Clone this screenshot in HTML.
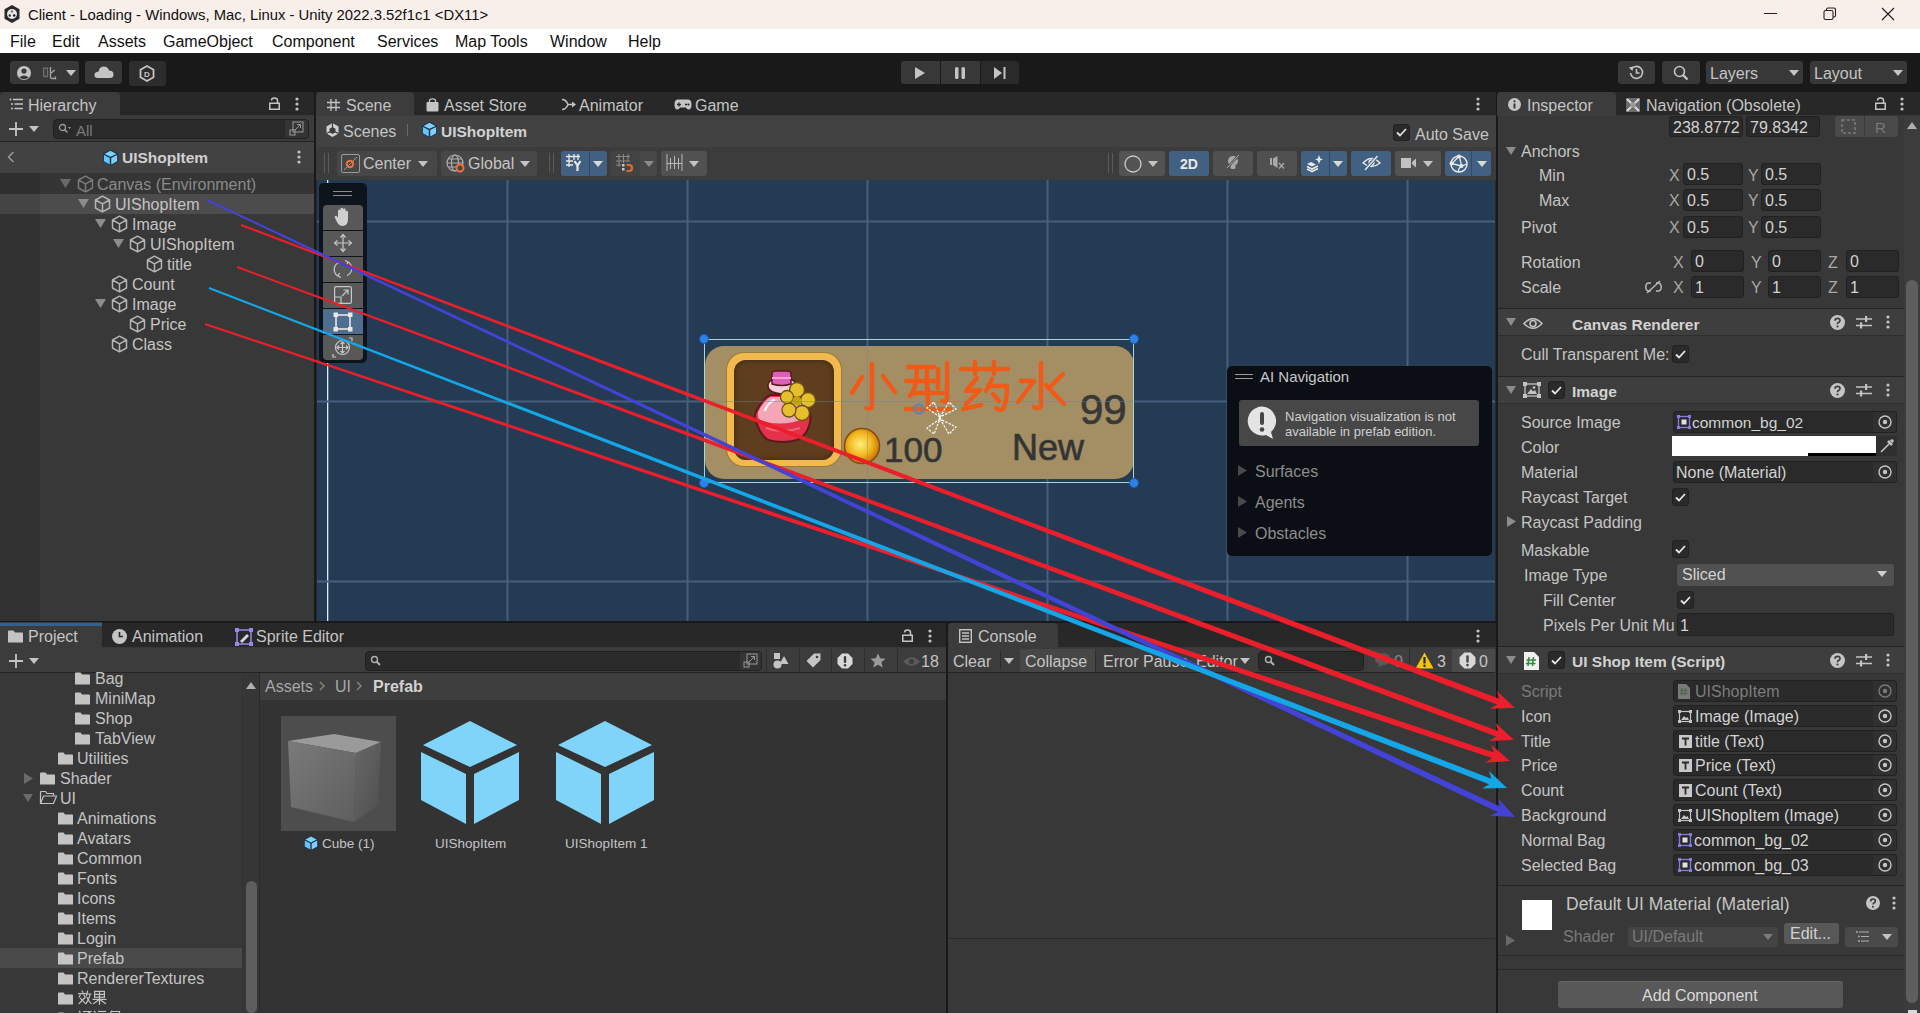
<!DOCTYPE html>
<html><head><meta charset="utf-8">
<style>
*{margin:0;padding:0;box-sizing:border-box}
html,body{width:1920px;height:1013px;overflow:hidden;background:#191919;font-family:"Liberation Sans",sans-serif}
.a{position:absolute}
.t{position:absolute;white-space:pre;line-height:1;font-size:16px;color:#c4c4c4;margin-top:1px}
.b{font-weight:bold}
svg{position:absolute;overflow:visible}
.fld{position:absolute;background:#2a2a2a;border-radius:3px;border:1px solid #212121}
.btn{position:absolute;background:#585858;border-radius:3px}
.tb{position:absolute;background:#383838;border-radius:3px}
.chk{position:absolute;width:17px;height:18px;background:#2a2a2a;border-radius:3px;border:1px solid #212121}
</style></head><body>
<!-- TITLE BAR -->
<div class="a" style="left:0;top:0;width:1920px;height:29px;background:#f8eeea"></div>
<!-- MENU -->
<div class="a" style="left:0;top:29px;width:1920px;height:24px;background:#ffffff"></div>
<!-- TOOLBAR -->
<div class="a" style="left:0;top:53px;width:1920px;height:39px;background:#191919"></div>

<!-- HIERARCHY PANEL -->
<div class="a" id="hier" style="left:0;top:92px;width:314px;height:529px;background:#282828"></div>
<div class="a" style="left:0;top:115px;width:314px;height:506px;background:#383838"></div>
<!-- SCENE PANEL -->
<div class="a" style="left:316px;top:92px;width:1180px;height:529px;background:#282828"></div>
<div class="a" style="left:316px;top:115px;width:1180px;height:65px;background:#3c3c3c"></div><div class="a" style="left:316px;top:116px;width:1180px;height:31px;background:#424242"></div>
<div class="a" style="left:317px;top:180px;width:1178px;height:441px;background:#253b54"></div>
<!-- INSPECTOR -->
<div class="a" style="left:1498px;top:92px;width:422px;height:921px;background:#282828"></div>
<div class="a" style="left:1498px;top:115px;width:422px;height:898px;background:#383838"></div>
<!-- PROJECT -->
<div class="a" style="left:0;top:623px;width:946px;height:390px;background:#282828"></div>
<div class="a" style="left:0;top:647px;width:946px;height:366px;background:#383838"></div>
<!-- CONSOLE -->
<div class="a" style="left:948px;top:623px;width:548px;height:390px;background:#282828"></div>
<div class="a" style="left:948px;top:647px;width:548px;height:366px;background:#383838"></div>


<!-- TITLE CONTENT -->
<svg style="left:3px;top:4px" width="18" height="20" viewBox="0 0 18 20"><path d="M9 1 L16.5 5.2 V14.8 L9 19 L1.5 14.8 V5.2Z" fill="#2a2a2a"/><circle cx="9" cy="10" r="5" fill="#e8e8e8"/><circle cx="9" cy="7.5" r="1.2" fill="#777"/><circle cx="6.8" cy="11.5" r="1.2" fill="#333"/><circle cx="11.2" cy="11.5" r="1.2" fill="#111"/></svg>
<div class="t" style="left:28px;top:7px;font-size:14.85px;color:#111">Client - Loading - Windows, Mac, Linux - Unity 2022.3.52f1c1 &lt;DX11&gt;</div>
<div class="a" style="left:1764px;top:13px;width:13px;height:1px;background:#222"></div>
<svg style="left:1823px;top:7px" width="14" height="14" viewBox="0 0 14 14"><rect x="1" y="3.5" width="9" height="9" rx="1.5" fill="none" stroke="#222" stroke-width="1.1"/><path d="M3.5 3.5 V2.5 Q3.5 1 5 1 H11 Q12.5 1 12.5 2.5 V8.5 Q12.5 10 11 10 H10" fill="none" stroke="#222" stroke-width="1.1"/></svg>
<svg style="left:1881px;top:7px" width="14" height="14" viewBox="0 0 14 14"><path d="M1 1 L13 13 M13 1 L1 13" stroke="#222" stroke-width="1.2"/></svg>
<!-- MENU CONTENT -->
<div class="t" style="left:10px;top:33px;font-size:16px;color:#111">File</div>
<div class="t" style="left:52px;top:33px;font-size:16px;color:#111">Edit</div>
<div class="t" style="left:98px;top:33px;font-size:16px;color:#111">Assets</div>
<div class="t" style="left:163px;top:33px;font-size:16px;color:#111">GameObject</div>
<div class="t" style="left:272px;top:33px;font-size:16px;color:#111">Component</div>
<div class="t" style="left:377px;top:33px;font-size:16px;color:#111">Services</div>
<div class="t" style="left:455px;top:33px;font-size:16px;color:#111">Map Tools</div>
<div class="t" style="left:550px;top:33px;font-size:16px;color:#111">Window</div>
<div class="t" style="left:628px;top:33px;font-size:16px;color:#111">Help</div>
<!-- TOOLBAR CONTENT -->
<div class="tb" style="left:10px;top:61px;width:69px;height:23px"></div>
<svg style="left:16px;top:65px" width="16" height="16" viewBox="0 0 16 16"><circle cx="8" cy="8" r="7" fill="#c4c4c4"/><circle cx="8" cy="6" r="2.6" fill="#383838"/><path d="M3.3 12.5 Q8 8.5 12.7 12.5 Q8 16 3.3 12.5Z" fill="#383838"/></svg>
<svg style="left:40px;top:64px" width="20" height="18" viewBox="40 64 20 18"><rect x="43.7" y="68.2" width="3.8" height="8.3" fill="none" stroke="#6e6e6e" stroke-width="1.4"/><path d="M50.5 67 V77.5 Q50.5 78.5 52 78.5 H55.5 V76.5 M50.5 73.5 L54.8 70" fill="none" stroke="#a8a8a8" stroke-width="1.3"/></svg>
<svg style="left:66px;top:70px" width="10" height="6" viewBox="0 0 10 6"><path d="M0 0H10L5 6Z" fill="#c4c4c4"/></svg>
<div class="tb" style="left:85px;top:61px;width:37px;height:23px"></div>
<svg style="left:94px;top:65px" width="20" height="14" viewBox="0 0 20 14"><path d="M4 13 Q0 13 0.5 9.5 Q1 6.5 4.5 6.8 Q5 2 9.5 1.5 Q14 1.5 15 5.5 Q19.5 5.5 19.5 9.5 Q19.5 13 16 13Z" fill="#c4c4c4"/></svg>
<div class="tb" style="left:129px;top:61px;width:37px;height:25px;background:#2d2d2d"></div>
<svg style="left:139px;top:65px" width="16" height="17" viewBox="0 0 16 17"><path d="M8 1 L14.5 4.7 V12.3 L8 16 L1.5 12.3 V4.7Z" fill="none" stroke="#c4c4c4" stroke-width="1.8"/><text x="8" y="12" font-size="8" font-weight="bold" text-anchor="middle" fill="#c4c4c4" font-family="Liberation Sans">D</text></svg>
<div class="tb" style="left:901px;top:61px;width:39px;height:23px;border-radius:3px 0 0 3px"></div>
<div class="tb" style="left:941px;top:61px;width:39px;height:23px;border-radius:0"></div>
<div class="tb" style="left:981px;top:61px;width:38px;height:23px;background:#2a2a2a;border-radius:0 3px 3px 0"></div>
<svg style="left:914px;top:67px" width="12" height="12" viewBox="0 0 12 12"><path d="M1 0 L11 6 L1 12Z" fill="#c4c4c4"/></svg>
<svg style="left:955px;top:67px" width="11" height="12" viewBox="0 0 11 12"><rect x="0" y="0" width="3.5" height="12" rx="1.5" fill="#c4c4c4"/><rect x="6.5" y="0" width="3.5" height="12" rx="1.5" fill="#c4c4c4"/></svg>
<svg style="left:994px;top:67px" width="12" height="12" viewBox="0 0 12 12"><path d="M0 0 L8 6 L0 12Z" fill="#c4c4c4"/><rect x="9.5" y="0" width="2" height="12" fill="#c4c4c4"/></svg>
<div class="tb" style="left:1618px;top:61px;width:37px;height:23px"></div>
<svg style="left:1628px;top:64px" width="17" height="17" viewBox="0 0 17 17"><path d="M3.2 5.5 A6 6 0 1 1 2.5 9" fill="none" stroke="#c4c4c4" stroke-width="1.6"/><path d="M0.8 3.5 L4.5 7 L5.2 2.5Z" fill="#c4c4c4"/><path d="M8.5 5 V9 H11.5" fill="none" stroke="#c4c4c4" stroke-width="1.6"/></svg>
<div class="tb" style="left:1662px;top:61px;width:38px;height:23px"></div>
<svg style="left:1673px;top:65px" width="16" height="16" viewBox="0 0 16 16"><circle cx="6.5" cy="6.5" r="5" fill="none" stroke="#c4c4c4" stroke-width="1.6"/><path d="M10 10 L14.5 14.5" stroke="#c4c4c4" stroke-width="2.4"/></svg>
<div class="tb" style="left:1706px;top:61px;width:97px;height:23px"></div>
<div class="t" style="left:1710px;top:65px;font-size:16px">Layers</div>
<svg style="left:1789px;top:70px" width="10" height="6" viewBox="0 0 10 6"><path d="M0 0H10L5 6Z" fill="#c4c4c4"/></svg>
<div class="tb" style="left:1810px;top:61px;width:97px;height:23px"></div>
<div class="t" style="left:1814px;top:65px;font-size:16px">Layout</div>
<svg style="left:1893px;top:70px" width="10" height="6" viewBox="0 0 10 6"><path d="M0 0H10L5 6Z" fill="#c4c4c4"/></svg>

<div class="a" style="left:0;top:92px;width:120px;height:24px;background:#3c3c3c;border-radius:4px 4px 0 0"></div>
<svg style="left:9px;top:98px" width="14" height="12" viewBox="0 0 14 12"><path d="M4 1.5H14M5.5 6H14M5.5 10.5H14" stroke="#c4c4c4" stroke-width="1.4"/><circle cx="1.5" cy="1.5" r="1" fill="#c4c4c4"/><circle cx="3" cy="6" r="1" fill="#c4c4c4"/><circle cx="3" cy="10.5" r="1" fill="#c4c4c4"/></svg>
<div class="t" style="left:28px;top:97px">Hierarchy</div>
<svg style="left:269px;top:97px" width="11" height="13" viewBox="0 0 11 13"><rect x="0.75" y="6.25" width="9.5" height="6" fill="none" stroke="#c4c4c4" stroke-width="1.5"/><path d="M8.5 6 V3.5 Q8.5 1 5.5 1 Q2.5 1 2.5 3.5" fill="none" stroke="#c4c4c4" stroke-width="1.5"/></svg>
<svg style="left:295px;top:97px" width="4" height="14" viewBox="0 0 4 14"><circle cx="2" cy="2" r="1.6" fill="#c4c4c4"/><circle cx="2" cy="7" r="1.6" fill="#c4c4c4"/><circle cx="2" cy="12" r="1.6" fill="#c4c4c4"/></svg>
<div class="a" style="left:0;top:116px;width:314px;height:25px;background:#3c3c3c"></div>
<div class="a" style="left:0;top:141px;width:314px;height:1px;background:#232323"></div>
<svg style="left:8px;top:121px" width="16" height="16" viewBox="0 0 16 16"><path d="M8 1V15M1 8H15" stroke="#c4c4c4" stroke-width="1.8"/></svg>
<svg style="left:29px;top:126px" width="10" height="6" viewBox="0 0 10 6"><path d="M0 0H10L5 6Z" fill="#c4c4c4"/></svg>
<div class="fld" style="left:53px;top:119px;width:256px;height:20px;border-radius:4px"></div>
<div class="a" style="left:285px;top:120px;width:23px;height:18px;background:#343434;border-radius:0 3px 3px 0"></div>
<svg style="left:289px;top:121px" width="15" height="15" viewBox="0 0 15 15"><rect x="4" y="1" width="10" height="10" fill="none" stroke="#9a9a9a" stroke-width="1"/><rect x="1" y="9" width="5" height="5" fill="none" stroke="#9a9a9a" stroke-width="1"/><path d="M6 9 L11.5 3.5 M8 3.5H11.5V7" fill="none" stroke="#9a9a9a" stroke-width="1"/></svg>
<svg style="left:58px;top:123px" width="14" height="12" viewBox="0 0 14 12"><circle cx="4.5" cy="4.5" r="3" fill="none" stroke="#9a9a9a" stroke-width="1.3"/><path d="M6.5 6.5 L9.5 9.5" stroke="#9a9a9a" stroke-width="1.5"/><path d="M10 4H13L11.5 6Z" fill="#9a9a9a"/></svg>
<div class="t" style="left:76px;top:122px;font-size:15px;color:#7a7a7a">All</div>
<div class="a" style="left:0;top:142px;width:314px;height:31px;background:#424242"></div>
<svg style="left:7px;top:151px" width="8" height="12" viewBox="0 0 8 12"><path d="M6.5 1 L1.5 6 L6.5 11" fill="none" stroke="#9a9a9a" stroke-width="1.5"/></svg>
<svg style="left:102px;top:149px" width="17" height="17" viewBox="0 0 16 16"><path d="M8 0.5 L15 4.3 V12 L8 15.8 L1 12 V4.3Z" fill="#1e3450"/><path d="M8 1.6 L13.6 4.6 L8 7.4 L2.4 4.6Z" fill="#7fd0fa"/><path d="M1.8 5.6 L7.3 8.4 V14.6 L1.8 11.6Z" fill="#6ac4f4"/><path d="M14.2 5.6 L8.7 8.4 V14.6 L14.2 11.6Z" fill="#7fd0fa"/></svg>
<div class="t b" style="left:122px;top:149px;font-size:15.5px;color:#d0d0d0">UIShopItem</div>
<svg style="left:297px;top:150px" width="4" height="14" viewBox="0 0 4 14"><circle cx="2" cy="2" r="1.6" fill="#c4c4c4"/><circle cx="2" cy="7" r="1.6" fill="#c4c4c4"/><circle cx="2" cy="12" r="1.6" fill="#c4c4c4"/></svg>
<div class="a" style="left:0;top:173px;width:314px;height:448px;background:#383838"></div>

<div class="a" style="left:0;top:173px;width:314px;height:21px;background:#353535"></div>
<div class="a" style="left:0;top:194px;width:314px;height:20px;background:#4c4c4c"></div><div class="a" style="left:0;top:173px;width:40px;height:448px;background:rgba(0,0,0,0.1)"></div>
<svg style="left:60px;top:179px" width="11" height="9" viewBox="0 0 11 9"><path d="M0 0H11L5.5 9Z" fill="#6a6a6a"/></svg>
<svg style="left:77px;top:175px" width="17" height="18" viewBox="0 0 17 18"><path d="M8.5 1.2 L15.5 5 V13 L8.5 16.8 L1.5 13 V5Z M1.5 5 L8.5 8.8 L15.5 5 M8.5 8.8 V16.8" fill="none" stroke="#7a7a7a" stroke-width="1.5" stroke-linejoin="round"/></svg>
<div class="t" style="left:97px;top:176px;color:#8a8a8a">Canvas (Environment)</div>
<svg style="left:78px;top:199px" width="11" height="9" viewBox="0 0 11 9"><path d="M0 0H11L5.5 9Z" fill="#8c8c8c"/></svg>
<svg style="left:94px;top:195px" width="17" height="18" viewBox="0 0 17 18"><path d="M8.5 1.2 L15.5 5 V13 L8.5 16.8 L1.5 13 V5Z M1.5 5 L8.5 8.8 L15.5 5 M8.5 8.8 V16.8" fill="none" stroke="#b4b4b4" stroke-width="1.5" stroke-linejoin="round"/></svg>
<div class="t" style="left:115px;top:196px;color:#c4c4c4">UIShopItem</div>
<svg style="left:95px;top:219px" width="11" height="9" viewBox="0 0 11 9"><path d="M0 0H11L5.5 9Z" fill="#8c8c8c"/></svg>
<svg style="left:111px;top:215px" width="17" height="18" viewBox="0 0 17 18"><path d="M8.5 1.2 L15.5 5 V13 L8.5 16.8 L1.5 13 V5Z M1.5 5 L8.5 8.8 L15.5 5 M8.5 8.8 V16.8" fill="none" stroke="#b4b4b4" stroke-width="1.5" stroke-linejoin="round"/></svg>
<div class="t" style="left:132px;top:216px;color:#c4c4c4">Image</div>
<svg style="left:113px;top:239px" width="11" height="9" viewBox="0 0 11 9"><path d="M0 0H11L5.5 9Z" fill="#8c8c8c"/></svg>
<svg style="left:129px;top:235px" width="17" height="18" viewBox="0 0 17 18"><path d="M8.5 1.2 L15.5 5 V13 L8.5 16.8 L1.5 13 V5Z M1.5 5 L8.5 8.8 L15.5 5 M8.5 8.8 V16.8" fill="none" stroke="#b4b4b4" stroke-width="1.5" stroke-linejoin="round"/></svg>
<div class="t" style="left:150px;top:236px;color:#c4c4c4">UIShopItem</div>
<svg style="left:146px;top:255px" width="17" height="18" viewBox="0 0 17 18"><path d="M8.5 1.2 L15.5 5 V13 L8.5 16.8 L1.5 13 V5Z M1.5 5 L8.5 8.8 L15.5 5 M8.5 8.8 V16.8" fill="none" stroke="#b4b4b4" stroke-width="1.5" stroke-linejoin="round"/></svg>
<div class="t" style="left:167px;top:256px;color:#c4c4c4">title</div>
<svg style="left:111px;top:275px" width="17" height="18" viewBox="0 0 17 18"><path d="M8.5 1.2 L15.5 5 V13 L8.5 16.8 L1.5 13 V5Z M1.5 5 L8.5 8.8 L15.5 5 M8.5 8.8 V16.8" fill="none" stroke="#b4b4b4" stroke-width="1.5" stroke-linejoin="round"/></svg>
<div class="t" style="left:132px;top:276px;color:#c4c4c4">Count</div>
<svg style="left:95px;top:299px" width="11" height="9" viewBox="0 0 11 9"><path d="M0 0H11L5.5 9Z" fill="#8c8c8c"/></svg>
<svg style="left:111px;top:295px" width="17" height="18" viewBox="0 0 17 18"><path d="M8.5 1.2 L15.5 5 V13 L8.5 16.8 L1.5 13 V5Z M1.5 5 L8.5 8.8 L15.5 5 M8.5 8.8 V16.8" fill="none" stroke="#b4b4b4" stroke-width="1.5" stroke-linejoin="round"/></svg>
<div class="t" style="left:132px;top:296px;color:#c4c4c4">Image</div>
<svg style="left:129px;top:315px" width="17" height="18" viewBox="0 0 17 18"><path d="M8.5 1.2 L15.5 5 V13 L8.5 16.8 L1.5 13 V5Z M1.5 5 L8.5 8.8 L15.5 5 M8.5 8.8 V16.8" fill="none" stroke="#b4b4b4" stroke-width="1.5" stroke-linejoin="round"/></svg>
<div class="t" style="left:150px;top:316px;color:#c4c4c4">Price</div>
<svg style="left:111px;top:335px" width="17" height="18" viewBox="0 0 17 18"><path d="M8.5 1.2 L15.5 5 V13 L8.5 16.8 L1.5 13 V5Z M1.5 5 L8.5 8.8 L15.5 5 M8.5 8.8 V16.8" fill="none" stroke="#b4b4b4" stroke-width="1.5" stroke-linejoin="round"/></svg>
<div class="t" style="left:132px;top:336px;color:#c4c4c4">Class</div>
<div class="a" style="left:316px;top:92px;width:98px;height:24px;background:#3c3c3c;border-radius:4px 4px 0 0"></div>
<svg style="left:327px;top:99px" width="13" height="12" viewBox="0 0 13 12"><path d="M4 0V12M9 0V12M0 3.5H13M0 8.5H13" stroke="#c4c4c4" stroke-width="1.3"/></svg>
<div class="t" style="left:346px;top:97px;font-size:16px">Scene</div>
<svg style="left:426px;top:98px" width="13" height="14" viewBox="0 0 13 14"><path d="M3.5 4V2.5Q3.5 0.8 6.5 0.8Q9.5 0.8 9.5 2.5V4" fill="none" stroke="#c4c4c4" stroke-width="1.3"/><rect x="0.5" y="4" width="12" height="9.5" rx="1" fill="#c4c4c4"/></svg>
<div class="t" style="left:444px;top:97px;font-size:16px">Asset Store</div>
<svg style="left:561px;top:98px" width="16" height="13" viewBox="0 0 16 13"><path d="M1 1.5 Q5 1.5 7 6.5 Q5 11.5 1 11.5 M7 6.5 H13" fill="none" stroke="#c4c4c4" stroke-width="1.5"/><path d="M11 3.5 L15 6.5 L11 9.5Z" fill="#c4c4c4"/></svg>
<div class="t" style="left:579px;top:97px;font-size:16px">Animator</div>
<svg style="left:674px;top:99px" width="18" height="11" viewBox="0 0 18 11"><path d="M4 0.5H14Q17.5 0.5 17.5 5.5Q17.5 10.5 14.5 10.5Q13 10.5 12 8.5H6Q5 10.5 3.5 10.5Q0.5 10.5 0.5 5.5Q0.5 0.5 4 0.5Z" fill="#c4c4c4"/><path d="M3 5.5H7M5 3.5V7.5" stroke="#282828" stroke-width="1.3"/><circle cx="12" cy="5.5" r="1.1" fill="#282828"/><circle cx="14.5" cy="5.5" r="1.1" fill="#282828"/></svg>
<div class="t" style="left:695px;top:97px;font-size:16px">Game</div>
<svg style="left:1476px;top:97px" width="4" height="14" viewBox="0 0 4 14"><circle cx="2" cy="2" r="1.6" fill="#c4c4c4"/><circle cx="2" cy="7" r="1.6" fill="#c4c4c4"/><circle cx="2" cy="12" r="1.6" fill="#c4c4c4"/></svg>
<svg style="left:325px;top:122px" width="15" height="16" viewBox="0 0 15 16"><path d="M7.5 1 L13.5 4.5 V11.5 L7.5 15 L1.5 11.5 V4.5Z" fill="#d0d0d0"/><path d="M7.5 5 L10.5 6.8 V10.2 L7.5 12 L4.5 10.2 V6.8Z" fill="#3c3c3c"/><path d="M7.5 8.5V1M7.5 8.5L1.5 11.5M7.5 8.5L13.5 11.5" stroke="#3c3c3c" stroke-width="1.2"/></svg>
<div class="t" style="left:343px;top:123px;font-size:16px">Scenes</div>
<div class="a" style="left:407px;top:124px;width:1px;height:12px;background:#6a6a6a;"></div>
<svg style="left:421px;top:121px" width="17" height="17" viewBox="0 0 16 16"><path d="M8 0.5 L15 4.3 V12 L8 15.8 L1 12 V4.3Z" fill="#1e3450"/><path d="M8 1.6 L13.6 4.6 L8 7.4 L2.4 4.6Z" fill="#7fd0fa"/><path d="M1.8 5.6 L7.3 8.4 V14.6 L1.8 11.6Z" fill="#6ac4f4"/><path d="M14.2 5.6 L8.7 8.4 V14.6 L14.2 11.6Z" fill="#7fd0fa"/></svg>
<div class="t b" style="left:441px;top:123px;font-size:15.5px;color:#d2d2d2">UIShopItem</div>
<div class="chk" style="left:1393px;top:124px;width:17px;height:17px"></div>
<svg style="left:1396px;top:128px" width="11" height="9" viewBox="0 0 11 9"><path d="M1 4.5 L4 7.5 L10 1" fill="none" stroke="#e0e0e0" stroke-width="1.8"/></svg>
<div class="t" style="left:1415px;top:126px;font-size:16px">Auto Save</div>
<div class="a" style="left:324px;top:153px;width:1px;height:20px;background:#5a5a5a;"></div>
<div class="a" style="left:328px;top:153px;width:1px;height:20px;background:#5a5a5a;"></div>
<div class="a" style="left:337px;top:151px;width:100px;height:25px;background:#474747;border-radius:3px"></div>
<svg style="left:341px;top:154px" width="19" height="19" viewBox="0 0 19 19"><rect x="0.5" y="0.5" width="18" height="18" rx="1.5" fill="none" stroke="#9a9a9a" stroke-width="1"/><path d="M3 16 L16 3" stroke="#9a9a9a" stroke-width="1"/><circle cx="9" cy="10" r="3.2" fill="none" stroke="#f0703a" stroke-width="2"/></svg>
<div class="t" style="left:363px;top:155px;font-size:16px">Center</div>
<svg style="left:418px;top:161px" width="10" height="6" viewBox="0 0 10 6"><path d="M0 0H10L5 6Z" fill="#c4c4c4"/></svg>
<div class="a" style="left:441px;top:151px;width:96px;height:25px;background:#474747;border-radius:3px"></div>
<svg style="left:446px;top:154px" width="19" height="19" viewBox="0 0 19 19"><circle cx="9" cy="9" r="8" fill="none" stroke="#b0b0b0" stroke-width="1.2"/><ellipse cx="9" cy="9" rx="3.5" ry="8" fill="none" stroke="#b0b0b0" stroke-width="1.2"/><path d="M1 9H17M2.5 5H15.5M2.5 13H15.5" stroke="#b0b0b0" stroke-width="1.2"/><circle cx="14" cy="14" r="3.5" fill="#474747" stroke="#f0703a" stroke-width="2"/></svg>
<div class="t" style="left:468px;top:155px;font-size:16px">Global</div>
<svg style="left:520px;top:161px" width="10" height="6" viewBox="0 0 10 6"><path d="M0 0H10L5 6Z" fill="#c4c4c4"/></svg>
<div class="a" style="left:549px;top:153px;width:1px;height:20px;background:#5a5a5a;"></div>
<div class="a" style="left:553px;top:153px;width:1px;height:20px;background:#5a5a5a;"></div>
<div class="a" style="left:561px;top:151px;width:46px;height:25px;background:#426082;border-radius:3px"></div>
<div class="a" style="left:589px;top:151px;width:1px;height:25px;background:#314a66;"></div>
<svg style="left:566px;top:154px" width="19" height="19" viewBox="0 0 19 19"><path d="M3 0V13M8 0V6M12 0V6M0 2.5H14M0 7H7M0 11H7" stroke="#e8e8e8" stroke-width="1.3"/><path d="M8.5 7 L11.5 11.5 L14.5 7 M11.5 11.5V17" fill="none" stroke="#e8e8e8" stroke-width="2.2"/></svg>
<svg style="left:593px;top:161px" width="10" height="6" viewBox="0 0 10 6"><path d="M0 0H10L5 6Z" fill="#d8d8d8"/></svg>
<div class="a" style="left:611px;top:151px;width:46px;height:25px;background:#434343;border-radius:3px"></div>
<div class="a" style="left:640px;top:151px;width:17px;height:25px;background:#474747;border-radius:0 3px 3px 0"></div>
<svg style="left:616px;top:154px" width="19" height="19" viewBox="0 0 19 19"><path d="M3 0V13M7.5 0V9M12 0V7M0 2.5H14M0 7H14M0 11H5" stroke="#8a8a8a" stroke-width="1"/><rect x="6" y="10" width="2.5" height="2.5" fill="#c8c8c8"/><rect x="6" y="14" width="2.5" height="2.5" fill="#c8c8c8"/><path d="M10.5 11 H13 A3 3 0 0 1 13 17 H10.5" fill="none" stroke="#e06a30" stroke-width="2.2"/></svg>
<svg style="left:644px;top:161px" width="10" height="6" viewBox="0 0 10 6"><path d="M0 0H10L5 6Z" fill="#8a8a8a"/></svg>
<div class="a" style="left:661px;top:151px;width:46px;height:25px;background:#515151;border-radius:3px"></div>
<svg style="left:666px;top:154px" width="17" height="18" viewBox="0 0 17 18"><path d="M1 0V17M16 0V17M4.5 4V15M8.5 2V15M12.5 4V15M1 9.5H16" stroke="#b8b8b8" stroke-width="1"/></svg>
<svg style="left:689px;top:161px" width="10" height="6" viewBox="0 0 10 6"><path d="M0 0H10L5 6Z" fill="#c4c4c4"/></svg>
<div class="a" style="left:1108px;top:153px;width:1px;height:20px;background:#5a5a5a;"></div>
<div class="a" style="left:1112px;top:153px;width:1px;height:20px;background:#5a5a5a;"></div>
<div class="a" style="left:1119px;top:151px;width:46px;height:25px;background:#535353;border-radius:3px"></div>
<svg style="left:1124px;top:155px" width="18" height="18" viewBox="0 0 18 18"><circle cx="9" cy="9" r="8" fill="none" stroke="#c8c8c8" stroke-width="1.3"/><path d="M13 2.5 A8 8 0 0 1 4 16 A7 7 0 0 0 13 2.5Z" fill="#c8c8c8"/></svg>
<svg style="left:1148px;top:161px" width="10" height="6" viewBox="0 0 10 6"><path d="M0 0H10L5 6Z" fill="#c4c4c4"/></svg>
<div class="a" style="left:1169px;top:151px;width:40px;height:25px;background:#426082;border-radius:3px"></div>
<div class="t b" style="left:1180px;top:156px;font-size:14px;color:#e8e8e8">2D</div>
<div class="a" style="left:1213px;top:151px;width:40px;height:25px;background:#505050;border-radius:3px"></div>
<svg style="left:1225px;top:154px" width="16" height="18" viewBox="0 0 16 18"><circle cx="8" cy="7" r="5" fill="#a8a8a8"/><rect x="5.5" y="11" width="5" height="4" rx="1.5" fill="#a8a8a8"/><path d="M2 14 L14 1" stroke="#505050" stroke-width="2.5"/><path d="M2 14 L14 1" stroke="#a8a8a8" stroke-width="1"/></svg>
<div class="a" style="left:1257px;top:151px;width:40px;height:25px;background:#505050;border-radius:3px"></div>
<svg style="left:1270px;top:156px" width="16" height="14" viewBox="0 0 16 14"><rect x="0" y="2" width="2" height="7" fill="#a8a8a8"/><path d="M3 2.5 L7.5 0 V12 L3 9Z" fill="#a8a8a8"/><path d="M9 7 L14 12.5 M14 7 L9 12.5" stroke="#a8a8a8" stroke-width="1.3"/></svg>
<div class="a" style="left:1301px;top:151px;width:46px;height:25px;background:#426082;border-radius:3px"></div>
<div class="a" style="left:1329px;top:151px;width:1px;height:25px;background:#314a66;"></div>
<svg style="left:1306px;top:155px" width="17" height="17" viewBox="0 0 17 17"><path d="M13 0 L14.3 3.5 L17 4.5 L14.3 5.5 L13 9 L11.7 5.5 L9 4.5 L11.7 3.5Z" fill="#e8e8e8"/><path d="M1 9 L5 7 L10 9.5 L6 11.5Z" fill="#e8e8e8"/><path d="M1 11.5 L6 14 L12 11" fill="none" stroke="#e8e8e8" stroke-width="1.6"/><path d="M1 14 L6 16.5 L12 13.5" fill="none" stroke="#e8e8e8" stroke-width="1.6"/></svg>
<svg style="left:1333px;top:161px" width="10" height="6" viewBox="0 0 10 6"><path d="M0 0H10L5 6Z" fill="#d8d8d8"/></svg>
<div class="a" style="left:1351px;top:151px;width:40px;height:25px;background:#426082;border-radius:3px"></div>
<svg style="left:1362px;top:155px" width="19" height="16" viewBox="0 0 19 16"><path d="M1 8 Q9.5 -1 18 8 Q9.5 15 1 8Z" fill="none" stroke="#e8e8e8" stroke-width="1.4"/><circle cx="9.5" cy="7.5" r="2.5" fill="none" stroke="#e8e8e8" stroke-width="1.3"/><path d="M3 15 L15.5 1" stroke="#426082" stroke-width="3"/><path d="M3 15 L15.5 1" stroke="#e8e8e8" stroke-width="1.4"/></svg>
<div class="a" style="left:1395px;top:151px;width:46px;height:25px;background:#535353;border-radius:3px"></div>
<svg style="left:1401px;top:157px" width="16" height="12" viewBox="0 0 16 12"><rect x="0" y="1" width="10" height="10" fill="#c0c0c0"/><path d="M11 5 L15 1.5 V10.5 L11 7Z" fill="#c0c0c0"/></svg>
<svg style="left:1423px;top:161px" width="10" height="6" viewBox="0 0 10 6"><path d="M0 0H10L5 6Z" fill="#c4c4c4"/></svg>
<div class="a" style="left:1445px;top:151px;width:46px;height:25px;background:#426082;border-radius:3px"></div>
<div class="a" style="left:1471px;top:151px;width:1px;height:25px;background:#314a66;"></div>
<svg style="left:1449px;top:154px" width="20" height="20" viewBox="0 0 20 20"><circle cx="10" cy="10" r="8" fill="none" stroke="#e8e8e8" stroke-width="1.5"/><path d="M10 2 Q4 9 2.5 9.5 M10 2 Q12 8 12.5 12 Q8 16 10 18 M2.5 9.5 L12.5 12 L18 10" fill="none" stroke="#e8e8e8" stroke-width="1.3"/><circle cx="10" cy="2.5" r="2" fill="#e8e8e8"/><circle cx="2.5" cy="9.5" r="2" fill="#e8e8e8"/><circle cx="12.5" cy="12" r="2" fill="#e8e8e8"/></svg>
<svg style="left:1477px;top:161px" width="10" height="6" viewBox="0 0 10 6"><path d="M0 0H10L5 6Z" fill="#d8d8d8"/></svg>
<svg style="left:317px;top:180px" width="1178" height="441" viewBox="0 0 1178 441">
<rect x="10" y="0" width="1.3" height="441" fill="#dcecfa"/>
<rect x="189.5" y="0" width="2" height="441" fill="#46607c"/>
<rect x="369.5" y="0" width="2" height="441" fill="#46607c"/>
<rect x="549.5" y="0" width="2" height="441" fill="#46607c"/>
<rect x="729.5" y="0" width="2" height="441" fill="#46607c"/>
<rect x="909.5" y="0" width="2" height="441" fill="#46607c"/>
<rect x="1089.5" y="0" width="2" height="441" fill="#46607c"/>
<rect x="0" y="40.5" width="1178" height="2" fill="#46607c"/>
<rect x="0" y="220.5" width="1178" height="2" fill="#46607c"/>
<rect x="0" y="400.5" width="1178" height="2" fill="#46607c"/>
</svg>
<div class="a" style="left:319px;top:183px;width:48px;height:180px;background:#0e141b;border-radius:5px"></div>
<div class="a" style="left:333px;top:191px;width:19px;height:1px;background:#8a8a8a;"></div>
<div class="a" style="left:333px;top:195px;width:19px;height:1px;background:#8a8a8a;"></div>
<div class="a" style="left:323px;top:205px;width:40px;height:25px;background:#585858;border-radius:4px 4px 0 0"></div>
<div class="a" style="left:323px;top:231px;width:40px;height:25px;background:#585858;"></div>
<div class="a" style="left:323px;top:257px;width:40px;height:25px;background:#585858;"></div>
<div class="a" style="left:323px;top:283px;width:40px;height:25px;background:#585858;"></div>
<div class="a" style="left:323px;top:309px;width:40px;height:25px;background:#4f6d8e;"></div>
<div class="a" style="left:323px;top:335px;width:40px;height:25px;background:#585858;border-radius:0 0 4px 4px"></div>
<svg style="left:334px;top:207px" width="18" height="20" viewBox="0 0 18 20"><path d="M4 11 V4 Q4 2.5 5.2 2.5 Q6.4 2.5 6.4 4 V9 V2.2 Q6.4 0.8 7.7 0.8 Q9 0.8 9 2.2 V9 V2.8 Q9 1.4 10.3 1.4 Q11.6 1.4 11.6 2.8 V9.5 V5 Q11.6 3.8 12.8 3.8 Q14 3.8 14 5 V12 Q14 19 8.5 19 Q5 19 3 15 L0.8 10.5 Q0.3 9.2 1.5 8.8 Q2.5 8.5 3.2 9.6Z" fill="#d0d0d0"/></svg>
<svg style="left:333px;top:233px" width="20" height="20" viewBox="0 0 20 20"><path d="M10 2V18M2 10H18" stroke="#c8c8c8" stroke-width="1.2"/><path d="M7.5 4.5L10 1.5L12.5 4.5M7.5 15.5L10 18.5L12.5 15.5M4.5 7.5L1.5 10L4.5 12.5M15.5 7.5L18.5 10L15.5 12.5" fill="none" stroke="#c8c8c8" stroke-width="1.2"/></svg>
<svg style="left:333px;top:259px" width="20" height="20" viewBox="0 0 20 20"><path d="M6 3.5 A7.5 7.5 0 0 0 5 17 M14 16.5 A7.5 7.5 0 0 0 15 3" fill="none" stroke="#c8c8c8" stroke-width="1.2"/><path d="M12 1.5 L15 3 L13.5 6 M8 18.5 L5 17 L6.5 14" fill="none" stroke="#c8c8c8" stroke-width="1.2"/></svg>
<svg style="left:334px;top:286px" width="18" height="18" viewBox="0 0 18 18"><rect x="0.6" y="0.6" width="16.8" height="16.8" rx="1.5" fill="none" stroke="#c8c8c8" stroke-width="1.2"/><path d="M0.6 11 H7 V17.4" fill="none" stroke="#c8c8c8" stroke-width="1.2"/><path d="M8 10 L14 4 M9.5 4 H14 V8.5" fill="none" stroke="#c8c8c8" stroke-width="1.2"/></svg>
<svg style="left:333px;top:312px" width="20" height="20" viewBox="0 0 20 20"><rect x="3" y="3" width="14" height="14" fill="none" stroke="#e8e8e8" stroke-width="1.6"/><rect x="0.5" y="0.5" width="4.5" height="4.5" fill="#e8e8e8"/><rect x="15" y="0.5" width="4.5" height="4.5" fill="#e8e8e8"/><rect x="0.5" y="15" width="4.5" height="4.5" fill="#e8e8e8"/><rect x="15" y="15" width="4.5" height="4.5" fill="#e8e8e8"/></svg>
<svg style="left:332px;top:337px" width="21" height="21" viewBox="0 0 21 21"><circle cx="10.5" cy="10.5" r="7" fill="none" stroke="#c8c8c8" stroke-width="1.2"/><path d="M10.5 5V16M5 10.5H16" stroke="#c8c8c8" stroke-width="1.2"/><path d="M8.5 7L10.5 5L12.5 7M8.5 14L10.5 16L12.5 14M7 8.5L5 10.5L7 12.5M14 8.5L16 10.5L14 12.5" fill="none" stroke="#c8c8c8" stroke-width="1.1"/><path d="M1 17V20H4M17 1H20V4" fill="none" stroke="#c8c8c8" stroke-width="1.2"/></svg>
<div class="a" style="left:705px;top:346px;width:429px;height:133px;background:#a38f63;border-radius:19px"></div>
<div class="a" style="left:704px;top:339px;width:430px;height:144px;border:1.5px solid #a8d8d0"></div>
<div class="a" style="left:699px;top:334px;width:10px;height:10px;border-radius:50%;background:#2f7fe8;border:1px solid #1b5db8"></div>
<div class="a" style="left:1129px;top:334px;width:10px;height:10px;border-radius:50%;background:#2f7fe8;border:1px solid #1b5db8"></div>
<div class="a" style="left:699px;top:478px;width:10px;height:10px;border-radius:50%;background:#2f7fe8;border:1px solid #1b5db8"></div>
<div class="a" style="left:1129px;top:478px;width:10px;height:10px;border-radius:50%;background:#2f7fe8;border:1px solid #1b5db8"></div>
<div class="a" style="left:727px;top:353px;width:114px;height:113px;background:#f2b94e;border-radius:17px;box-shadow:0 0 0 1px #9a7a3e"></div>
<div class="a" style="left:734px;top:360px;width:100px;height:100px;background:#5f3e1f;border-radius:12px;box-shadow:inset 0 0 6px #3d250f"></div>
<svg style="left:745px;top:365px" width="80" height="85" viewBox="745 365 80 85">
<path d="M770 395 Q763 398 756 412 Q753 418 757 424 Q761 436 768 440 Q782 444 797 440 Q806 436 809 426 Q812 418 809 411 Q803 398 797 395Z" fill="#e5324a" stroke="#5a1a20" stroke-width="2"/>
<path d="M771 397 Q764 400 758 412 Q757 418 760 420 Q782 428 806 418 Q808 414 806 410 Q801 400 796 397Z" fill="#f2a6b6"/>
<path d="M765 410 Q768 403 774 400" fill="none" stroke="#fff" stroke-width="2.5" stroke-linecap="round" opacity="0.85"/>
<path d="M766 428 Q782 434 800 428" fill="none" stroke="#f77a8a" stroke-width="2" opacity="0.7"/>
<path d="M768 387 Q767 380 776 379 H788 Q797 380 796 387 Q795 393 782 394 Q769 393 768 387Z" fill="#f5d0dc" stroke="#5a1a20" stroke-width="1.6"/>
<path d="M772 374 Q772 371 776 371 H787 Q791 371 791 374 V384 Q782 387 772 384Z" fill="#de5fb8" stroke="#5a1a20" stroke-width="1.5"/>
<path d="M772 378 H791" stroke="#f5a0d8" stroke-width="2"/>
<g fill="#e6c02c" stroke="#6e5212" stroke-width="1.3">
<circle cx="797" cy="390" r="7.5"/><circle cx="808" cy="400" r="7.5"/><circle cx="802" cy="413" r="7.5"/><circle cx="789" cy="410" r="7"/><circle cx="787" cy="397" r="6.5"/>
</g>
<circle cx="797" cy="401" r="4.5" fill="#caa01a"/>
</svg>
<svg style="left:843px;top:427px" width="38" height="38" viewBox="0 0 38 38"><defs><radialGradient id="cg" cx="0.45" cy="0.45" r="0.6"><stop offset="0" stop-color="#fff07a"/><stop offset="0.55" stop-color="#f2b61c"/><stop offset="1" stop-color="#c06a08"/></radialGradient></defs><circle cx="19" cy="19" r="17.5" fill="url(#cg)" stroke="#8a4a10" stroke-width="1.5"/></svg>
<svg style="left:845px;top:358px" width="225" height="58" viewBox="845 358 225 58" fill="none" stroke="#f05a16" stroke-width="4.4" stroke-linecap="round" stroke-linejoin="round">
<path d="M872 364 V406 Q872 410 866 408"/><path d="M862 377 L852 393"/><path d="M883 376 L895 392"/>
<path d="M908 367 H934"/><path d="M906 381 H935"/><path d="M917 368 Q917 388 910 396"/><path d="M927 368 V392"/><path d="M938 369 V388"/><path d="M947 363 V399 Q947 403 942 401"/>
<path d="M912 393 H943"/><path d="M928 389 V407"/><path d="M906 409 H950"/>
<path d="M961 369 H1008"/><path d="M975 362 V374"/><path d="M994 362 V374"/>
<path d="M977 378 L966 391 L980 390 L966 404"/><path d="M963 409 L981 405"/>
<path d="M992 379 L986 391"/><path d="M988 386 H1007 Q1007 402 1003 409 Q1000 411 996 408"/><path d="M993 394 L999 401"/>
<path d="M1041 363 V405 Q1041 410 1034 407"/><path d="M1021 381 H1034 L1018 402"/><path d="M1063 374 L1049 388"/><path d="M1046 385 L1064 404"/>
</svg>
<div class="t" style="left:1080px;top:388px;font-size:42px;-webkit-text-stroke:0.7px #3a3a3a;color:#383838">99</div>
<div class="t" style="left:884px;top:431px;font-size:35px;-webkit-text-stroke:0.7px #3a3a3a;color:#333">100</div>
<div class="t" style="left:1012px;top:429px;font-size:36px;-webkit-text-stroke:0.7px #3a3a3a;color:#333">New</div>
<svg style="left:910px;top:398px" width="52" height="42" viewBox="910 398 52 42"><circle cx="919" cy="409" r="4.5" fill="none" stroke="#5f84b0" stroke-width="2.4"/>
<g fill="none" stroke="#f4f4f4" stroke-width="1.3" stroke-dasharray="2.5 1.2"><path d="M940 417 L927 408 L934 402Z"/><path d="M940 417 L949 402 L956 409Z"/><path d="M940 419 L927 428 L934 434Z"/><path d="M940 419 L949 434 L956 427Z"/></g></svg>
<div class="a" style="left:705px;top:401px;width:429px;height:1px;background:rgba(110,130,150,0.45)"></div><div class="a" style="left:867px;top:346px;width:1px;height:133px;background:rgba(110,130,150,0.35)"></div>
<div class="a" style="left:1227px;top:366px;width:265px;height:190px;background:#0b0f15;border-radius:5px"></div>
<div class="a" style="left:1235px;top:374px;width:18px;height:1px;background:#9a9a9a;"></div>
<div class="a" style="left:1235px;top:378px;width:18px;height:1px;background:#9a9a9a;"></div>
<div class="t" style="left:1260px;top:368px;font-size:15px;color:#c8c8c8">AI Navigation</div>
<div class="a" style="left:1239px;top:400px;width:240px;height:46px;background:#474747;border-radius:3px"></div>
<svg style="left:1246px;top:405px" width="33" height="35" viewBox="0 0 33 35"><path d="M16 1.5 A14.5 14.5 0 1 0 20 30 L27 34 L25 27 A14.5 14.5 0 0 0 16 1.5Z" fill="#e4e4e4"/><rect x="14" y="7" width="4" height="13" rx="2" fill="#474747"/><circle cx="16" cy="24.5" r="2.3" fill="#474747"/></svg>
<div class="t" style="left:1285px;top:409px;font-size:13px;color:#cfcfcf">Navigation visualization is not</div>
<div class="t" style="left:1285px;top:424px;font-size:13px;color:#cfcfcf">available in prefab edition.</div>
<svg style="left:1238px;top:465px" width="9" height="11" viewBox="0 0 9 11"><path d="M0 0V11L9 5.5Z" fill="#4a4a4a"/></svg>
<div class="t" style="left:1255px;top:463px;font-size:16px;color:#8c8c8c">Surfaces</div>
<svg style="left:1238px;top:496px" width="9" height="11" viewBox="0 0 9 11"><path d="M0 0V11L9 5.5Z" fill="#4a4a4a"/></svg>
<div class="t" style="left:1255px;top:494px;font-size:16px;color:#8c8c8c">Agents</div>
<svg style="left:1238px;top:527px" width="9" height="11" viewBox="0 0 9 11"><path d="M0 0V11L9 5.5Z" fill="#4a4a4a"/></svg>
<div class="t" style="left:1255px;top:525px;font-size:16px;color:#8c8c8c">Obstacles</div>
<div class="a" style="left:1497px;top:92px;width:119px;height:24px;background:#3c3c3c;border-radius:4px 4px 0 0"></div>
<svg style="left:1508px;top:98px" width="13" height="13" viewBox="0 0 13 13"><circle cx="6.5" cy="6.5" r="6.5" fill="#c4c4c4"/><rect x="5.5" y="5.5" width="2" height="5" fill="#3c3c3c"/><circle cx="6.5" cy="3.3" r="1.1" fill="#3c3c3c"/></svg>
<div class="t" style="left:1527px;top:97px;font-size:16px">Inspector</div>
<svg style="left:1626px;top:98px" width="14" height="14" viewBox="0 0 14 14"><rect x="0" y="0" width="14" height="14" fill="#6a6a6a"/><path d="M1 1L13 13M13 1L1 13" stroke="#d8d8d8" stroke-width="2.2"/><rect x="4.5" y="4.5" width="5" height="5" fill="#9a9a9a"/></svg>
<div class="t" style="left:1646px;top:97px;font-size:16px">Navigation (Obsolete)</div>
<svg style="left:1875px;top:97px" width="11" height="13" viewBox="0 0 11 13"><rect x="0.75" y="6.25" width="9.5" height="6" fill="none" stroke="#c4c4c4" stroke-width="1.5"/><path d="M8.5 6 V3.5 Q8.5 1 5.5 1 Q2.5 1 2.5 3.5" fill="none" stroke="#c4c4c4" stroke-width="1.5"/></svg>
<svg style="left:1900px;top:97px" width="4" height="14" viewBox="0 0 4 14"><circle cx="2" cy="2" r="1.6" fill="#c4c4c4"/><circle cx="2" cy="7" r="1.6" fill="#c4c4c4"/><circle cx="2" cy="12" r="1.6" fill="#c4c4c4"/></svg>
<div class="a" style="left:1904px;top:116px;width:16px;height:897px;background:#3c3c3c;"></div>
<svg style="left:1907px;top:122px" width="10" height="7" viewBox="0 0 10 7"><path d="M0 7H10L5 0Z" fill="#b0b0b0"/></svg>
<div class="a" style="left:1906px;top:280px;width:12px;height:723px;background:#5e5e5e;border-radius:6px"></div>
<div class="fld" style="left:1669px;top:116px;width:74px;height:21px"></div><div class="t" style="left:1673px;top:118.5px;font-size:16px;color:#d2d2d2">238.8772</div>
<div class="fld" style="left:1746px;top:116px;width:74px;height:21px"></div><div class="t" style="left:1750px;top:118.5px;font-size:16px;color:#d2d2d2">79.8342</div>
<div class="a" style="left:1835px;top:116px;width:63px;height:21px;background:#4a4a4a;border-radius:3px"></div>
<div class="a" style="left:1864px;top:116px;width:1px;height:21px;background:#3a3a3a;"></div>
<svg style="left:1841px;top:119px" width="15" height="15" viewBox="0 0 15 15"><rect x="1" y="1" width="13" height="13" fill="none" stroke="#7a7a7a" stroke-width="1.6" stroke-dasharray="3 2"/></svg>
<div class="t" style="left:1875px;top:119px;font-size:15px;color:#7a7a7a">R</div>
<svg style="left:1506px;top:147px" width="10" height="8" viewBox="0 0 10 8"><path d="M0 0H10L5.0 8Z" fill="#8c8c8c"/></svg>
<div class="t" style="left:1521px;top:143px;font-size:16px">Anchors</div>
<div class="t" style="left:1539px;top:167px;font-size:16px">Min</div>
<div class="t" style="left:1669px;top:167px;font-size:16px;color:#a8a8a8">X</div>
<div class="fld" style="left:1683px;top:163px;width:60px;height:22px"></div><div class="t" style="left:1687px;top:166.0px;font-size:16px;color:#d2d2d2">0.5</div>
<div class="t" style="left:1748px;top:167px;font-size:16px;color:#a8a8a8">Y</div>
<div class="fld" style="left:1761px;top:163px;width:60px;height:22px"></div><div class="t" style="left:1765px;top:166.0px;font-size:16px;color:#d2d2d2">0.5</div>
<div class="t" style="left:1539px;top:192px;font-size:16px">Max</div>
<div class="t" style="left:1669px;top:192px;font-size:16px;color:#a8a8a8">X</div>
<div class="fld" style="left:1683px;top:189px;width:60px;height:22px"></div><div class="t" style="left:1687px;top:192.0px;font-size:16px;color:#d2d2d2">0.5</div>
<div class="t" style="left:1748px;top:192px;font-size:16px;color:#a8a8a8">Y</div>
<div class="fld" style="left:1761px;top:189px;width:60px;height:22px"></div><div class="t" style="left:1765px;top:192.0px;font-size:16px;color:#d2d2d2">0.5</div>
<div class="t" style="left:1521px;top:219px;font-size:16px">Pivot</div>
<div class="t" style="left:1669px;top:219px;font-size:16px;color:#a8a8a8">X</div>
<div class="fld" style="left:1683px;top:216px;width:60px;height:22px"></div><div class="t" style="left:1687px;top:219.0px;font-size:16px;color:#d2d2d2">0.5</div>
<div class="t" style="left:1748px;top:219px;font-size:16px;color:#a8a8a8">Y</div>
<div class="fld" style="left:1761px;top:216px;width:60px;height:22px"></div><div class="t" style="left:1765px;top:219.0px;font-size:16px;color:#d2d2d2">0.5</div>
<div class="t" style="left:1521px;top:254px;font-size:16px">Rotation</div>
<div class="t" style="left:1673px;top:254px;font-size:16px;color:#a8a8a8">X</div>
<div class="fld" style="left:1691px;top:250px;width:53px;height:22px"></div><div class="t" style="left:1695px;top:253.0px;font-size:16px;color:#d2d2d2">0</div>
<div class="t" style="left:1751px;top:254px;font-size:16px;color:#a8a8a8">Y</div>
<div class="fld" style="left:1768px;top:250px;width:53px;height:22px"></div><div class="t" style="left:1772px;top:253.0px;font-size:16px;color:#d2d2d2">0</div>
<div class="t" style="left:1828px;top:254px;font-size:16px;color:#a8a8a8">Z</div>
<div class="fld" style="left:1846px;top:250px;width:53px;height:22px"></div><div class="t" style="left:1850px;top:253.0px;font-size:16px;color:#d2d2d2">0</div>
<div class="t" style="left:1521px;top:279px;font-size:16px">Scale</div>
<div class="t" style="left:1673px;top:279px;font-size:16px;color:#a8a8a8">X</div>
<div class="fld" style="left:1691px;top:276px;width:53px;height:22px"></div><div class="t" style="left:1695px;top:279.0px;font-size:16px;color:#d2d2d2">1</div>
<div class="t" style="left:1751px;top:279px;font-size:16px;color:#a8a8a8">Y</div>
<div class="fld" style="left:1768px;top:276px;width:53px;height:22px"></div><div class="t" style="left:1772px;top:279.0px;font-size:16px;color:#d2d2d2">1</div>
<div class="t" style="left:1828px;top:279px;font-size:16px;color:#a8a8a8">Z</div>
<div class="fld" style="left:1846px;top:276px;width:53px;height:22px"></div><div class="t" style="left:1850px;top:279.0px;font-size:16px;color:#d2d2d2">1</div>
<svg style="left:1645px;top:280px" width="17" height="14" viewBox="0 0 17 14"><path d="M6 3 H4 Q0.8 3 0.8 7 Q0.8 11 4 11 H6 M11 3 H13 Q16.2 3 16.2 7 Q16.2 11 13 11 H11" fill="none" stroke="#b8b8b8" stroke-width="1.5"/><path d="M2 13 L15 1" stroke="#b8b8b8" stroke-width="1.5"/></svg>
<div class="a" style="left:1498px;top:308px;width:406px;height:1px;background:#242424;"></div>
<div class="a" style="left:1498px;top:309px;width:406px;height:27px;background:#3e3e3e;"></div>
<div class="a" style="left:1498px;top:335px;width:406px;height:1px;background:#2e2e2e;"></div>
<svg style="left:1506px;top:318px" width="10" height="8" viewBox="0 0 10 8"><path d="M0 0H10L5.0 8Z" fill="#8c8c8c"/></svg>
<svg style="left:1523px;top:317px" width="20" height="13" viewBox="0 0 20 13"><path d="M1 6.5 Q10 -3 19 6.5 Q10 16 1 6.5Z" fill="none" stroke="#c4c4c4" stroke-width="1.5"/><circle cx="10" cy="6.5" r="3" fill="none" stroke="#c4c4c4" stroke-width="1.6"/></svg>
<div class="t b" style="left:1572px;top:316px;font-size:15.5px;color:#d2d2d2">Canvas Renderer</div>
<svg style="left:1830px;top:315px" width="15" height="15" viewBox="0 0 15 15"><circle cx="7.5" cy="7.5" r="7.5" fill="#c4c4c4"/><path d="M5 5.8 Q5 3.3 7.5 3.3 Q10 3.3 10 5.5 Q10 7 8.3 7.6 Q7.5 8 7.5 9.2" fill="none" stroke="#3e3e3e" stroke-width="1.7"/><circle cx="7.5" cy="11.5" r="1.1" fill="#3e3e3e"/></svg>
<svg style="left:1856px;top:315px" width="16" height="15" viewBox="0 0 16 15"><path d="M0 4H16M0 10.5H16" stroke="#c4c4c4" stroke-width="1.3"/><rect x="9" y="1" width="2.2" height="6" fill="#c4c4c4"/><rect x="4" y="7.5" width="2.2" height="6" fill="#c4c4c4"/></svg>
<svg style="left:1886px;top:315px" width="4" height="14" viewBox="0 0 4 14"><circle cx="2" cy="2" r="1.6" fill="#c4c4c4"/><circle cx="2" cy="7" r="1.6" fill="#c4c4c4"/><circle cx="2" cy="12" r="1.6" fill="#c4c4c4"/></svg>
<div class="t" style="left:1521px;top:346px;font-size:16px">Cull Transparent Me:</div>
<div class="chk" style="left:1672px;top:345px"></div><svg style="left:1675px;top:350px" width="11" height="9" viewBox="0 0 11 9"><path d="M1 4.5 L4 7.5 L10 1" fill="none" stroke="#e8e8e8" stroke-width="1.8"/></svg>
<div class="a" style="left:1498px;top:376px;width:406px;height:1px;background:#242424;"></div>
<div class="a" style="left:1498px;top:377px;width:406px;height:27px;background:#3e3e3e;"></div>
<div class="a" style="left:1498px;top:403px;width:406px;height:1px;background:#2e2e2e;"></div>
<svg style="left:1506px;top:386px" width="10" height="8" viewBox="0 0 10 8"><path d="M0 0H10L5.0 8Z" fill="#8c8c8c"/></svg>
<svg style="left:1523px;top:382px" width="18" height="16" viewBox="0 0 18 16"><rect x="2" y="2" width="14" height="12" fill="none" stroke="#c4c4c4" stroke-width="1.3"/><rect x="0" y="0" width="4" height="4" fill="#c4c4c4"/><rect x="14" y="0" width="4" height="4" fill="#c4c4c4"/><rect x="0" y="12" width="4" height="4" fill="#c4c4c4"/><rect x="14" y="12" width="4" height="4" fill="#c4c4c4"/><path d="M4 12 L8 7 L10 9.5 L12 8 L14 12Z" fill="#c4c4c4"/><circle cx="11" cy="5.5" r="1.3" fill="#c4c4c4"/></svg>
<div class="chk" style="left:1548px;top:381px;width:17px;height:18px"></div>
<svg style="left:1551px;top:386px" width="11" height="9" viewBox="0 0 11 9"><path d="M1 4.5 L4 7.5 L10 1" fill="none" stroke="#e8e8e8" stroke-width="1.8"/></svg>
<div class="t b" style="left:1572px;top:383px;font-size:15.5px;color:#d2d2d2">Image</div>
<svg style="left:1830px;top:383px" width="15" height="15" viewBox="0 0 15 15"><circle cx="7.5" cy="7.5" r="7.5" fill="#c4c4c4"/><path d="M5 5.8 Q5 3.3 7.5 3.3 Q10 3.3 10 5.5 Q10 7 8.3 7.6 Q7.5 8 7.5 9.2" fill="none" stroke="#3e3e3e" stroke-width="1.7"/><circle cx="7.5" cy="11.5" r="1.1" fill="#3e3e3e"/></svg>
<svg style="left:1856px;top:383px" width="16" height="15" viewBox="0 0 16 15"><path d="M0 4H16M0 10.5H16" stroke="#c4c4c4" stroke-width="1.3"/><rect x="9" y="1" width="2.2" height="6" fill="#c4c4c4"/><rect x="4" y="7.5" width="2.2" height="6" fill="#c4c4c4"/></svg>
<svg style="left:1886px;top:383px" width="4" height="14" viewBox="0 0 4 14"><circle cx="2" cy="2" r="1.6" fill="#c4c4c4"/><circle cx="2" cy="7" r="1.6" fill="#c4c4c4"/><circle cx="2" cy="12" r="1.6" fill="#c4c4c4"/></svg>
<div class="t" style="left:1521px;top:414px;font-size:16px">Source Image</div>
<div class="fld" style="left:1673px;top:411px;width:224px;height:22px"></div>
<div class="a" style="left:1873px;top:412px;width:23px;height:20px;background:#303030;border-radius:0 3px 3px 0"></div>
<svg style="left:1878px;top:415px" width="14" height="14" viewBox="0 0 14 14"><circle cx="7" cy="7" r="6" fill="none" stroke="#c4c4c4" stroke-width="1.4"/><circle cx="7" cy="7" r="2.2" fill="#c4c4c4"/></svg>
<svg style="left:1677px;top:415px" width="14" height="14" viewBox="0 0 14 14"><rect x="1.5" y="1.5" width="11" height="11" fill="none" stroke="#8a7ae0" stroke-width="1.3"/><rect x="0" y="0" width="3" height="3" fill="#8a7ae0"/><rect x="11" y="0" width="3" height="3" fill="#8a7ae0"/><rect x="0" y="11" width="3" height="3" fill="#8a7ae0"/><rect x="11" y="11" width="3" height="3" fill="#8a7ae0"/><rect x="4.5" y="4.5" width="5" height="5" fill="#e0e0e0"/></svg>
<div class="t" style="left:1692px;top:414px;font-size:15.5px;color:#d2d2d2">common_bg_02</div>
<div class="t" style="left:1521px;top:439px;font-size:16px">Color</div>
<div class="a" style="left:1672px;top:436px;width:204px;height:20px;background:#ffffff;"></div>
<div class="a" style="left:1808px;top:453px;width:68px;height:3px;background:#000000;"></div>
<div class="a" style="left:1876px;top:436px;width:21px;height:20px;background:#2f2f2f;border-radius:0 3px 3px 0"></div>
<svg style="left:1880px;top:439px" width="14" height="14" viewBox="0 0 14 14"><path d="M1 13 L3 11 L9 5" stroke="#c4c4c4" stroke-width="1.6"/><path d="M8 2 L12 6" stroke="#c4c4c4" stroke-width="2.6"/><path d="M10 1.5 Q12 -0.5 13.5 1 Q14.5 2.5 12.5 4" fill="#c4c4c4"/></svg>
<div class="t" style="left:1521px;top:464px;font-size:16px">Material</div>
<div class="fld" style="left:1673px;top:461px;width:224px;height:22px"></div>
<div class="a" style="left:1873px;top:462px;width:23px;height:20px;background:#303030;border-radius:0 3px 3px 0"></div>
<svg style="left:1878px;top:465px" width="14" height="14" viewBox="0 0 14 14"><circle cx="7" cy="7" r="6" fill="none" stroke="#c4c4c4" stroke-width="1.4"/><circle cx="7" cy="7" r="2.2" fill="#c4c4c4"/></svg>

<div class="t" style="left:1676px;top:464px;font-size:16px;color:#d2d2d2">None (Material)</div>
<div class="t" style="left:1521px;top:489px;font-size:16px">Raycast Target</div>
<div class="chk" style="left:1672px;top:488px"></div><svg style="left:1675px;top:493px" width="11" height="9" viewBox="0 0 11 9"><path d="M1 4.5 L4 7.5 L10 1" fill="none" stroke="#e8e8e8" stroke-width="1.8"/></svg>
<svg style="left:1507px;top:516px" width="9" height="11" viewBox="0 0 9 11"><path d="M0 0V11L9 5.5Z" fill="#8c8c8c"/></svg>
<div class="t" style="left:1521px;top:514px;font-size:16px">Raycast Padding</div>
<div class="t" style="left:1521px;top:542px;font-size:16px">Maskable</div>
<div class="chk" style="left:1672px;top:540px"></div><svg style="left:1675px;top:545px" width="11" height="9" viewBox="0 0 11 9"><path d="M1 4.5 L4 7.5 L10 1" fill="none" stroke="#e8e8e8" stroke-width="1.8"/></svg>
<div class="t" style="left:1524px;top:567px;font-size:16px">Image Type</div>
<div class="a" style="left:1677px;top:564px;width:217px;height:22px;background:#515151;border-radius:3px"></div>
<div class="t" style="left:1682px;top:566px;font-size:16px;color:#d2d2d2">Sliced</div>
<svg style="left:1877px;top:571px" width="10" height="6" viewBox="0 0 10 6"><path d="M0 0H10L5 6Z" fill="#d0d0d0"/></svg>
<div class="t" style="left:1543px;top:592px;font-size:16px">Fill Center</div>
<div class="chk" style="left:1677px;top:591px"></div><svg style="left:1680px;top:596px" width="11" height="9" viewBox="0 0 11 9"><path d="M1 4.5 L4 7.5 L10 1" fill="none" stroke="#e8e8e8" stroke-width="1.8"/></svg>
<div class="t" style="left:1543px;top:617px;font-size:16px">Pixels Per Unit Mu</div>
<div class="fld" style="left:1677px;top:613px;width:217px;height:23px"></div><div class="t" style="left:1680px;top:616.5px;font-size:16px;color:#d2d2d2">1</div>
<div class="a" style="left:1498px;top:646px;width:406px;height:1px;background:#242424;"></div>
<div class="a" style="left:1498px;top:647px;width:406px;height:27px;background:#3e3e3e;"></div>
<div class="a" style="left:1498px;top:673px;width:406px;height:1px;background:#2e2e2e;"></div>
<svg style="left:1506px;top:656px" width="10" height="8" viewBox="0 0 10 8"><path d="M0 0H10L5.0 8Z" fill="#8c8c8c"/></svg>
<svg style="left:1524px;top:652px" width="15" height="18" viewBox="0 0 15 18"><path d="M0 0H10L15 5V18H0Z" fill="#f0f0f0"/><path d="M5 5 L4 14 M9.5 5 L8.5 14 M2.5 8 H12 M2 11.5 H11.5" stroke="#2f8a3a" stroke-width="1.5"/></svg>
<div class="chk" style="left:1548px;top:651px;width:17px;height:18px"></div>
<svg style="left:1551px;top:656px" width="11" height="9" viewBox="0 0 11 9"><path d="M1 4.5 L4 7.5 L10 1" fill="none" stroke="#e8e8e8" stroke-width="1.8"/></svg>
<div class="t b" style="left:1572px;top:653px;font-size:15.5px;color:#d2d2d2">UI Shop Item (Script)</div>
<svg style="left:1830px;top:653px" width="15" height="15" viewBox="0 0 15 15"><circle cx="7.5" cy="7.5" r="7.5" fill="#c4c4c4"/><path d="M5 5.8 Q5 3.3 7.5 3.3 Q10 3.3 10 5.5 Q10 7 8.3 7.6 Q7.5 8 7.5 9.2" fill="none" stroke="#3e3e3e" stroke-width="1.7"/><circle cx="7.5" cy="11.5" r="1.1" fill="#3e3e3e"/></svg>
<svg style="left:1856px;top:653px" width="16" height="15" viewBox="0 0 16 15"><path d="M0 4H16M0 10.5H16" stroke="#c4c4c4" stroke-width="1.3"/><rect x="9" y="1" width="2.2" height="6" fill="#c4c4c4"/><rect x="4" y="7.5" width="2.2" height="6" fill="#c4c4c4"/></svg>
<svg style="left:1886px;top:653px" width="4" height="14" viewBox="0 0 4 14"><circle cx="2" cy="2" r="1.6" fill="#c4c4c4"/><circle cx="2" cy="7" r="1.6" fill="#c4c4c4"/><circle cx="2" cy="12" r="1.6" fill="#c4c4c4"/></svg>
<div class="t" style="left:1521px;top:683px;font-size:16px;color:#7a7a7a">Script</div>
<div class="fld" style="left:1673px;top:680px;width:224px;height:22px"></div>
<div class="a" style="left:1873px;top:681px;width:23px;height:20px;background:#303030;border-radius:0 3px 3px 0"></div>
<svg style="left:1878px;top:684px" width="14" height="14" viewBox="0 0 14 14"><circle cx="7" cy="7" r="6" fill="none" stroke="#7a7a7a" stroke-width="1.4"/><circle cx="7" cy="7" r="2.2" fill="#7a7a7a"/></svg>
<svg style="left:1678px;top:684px" width="12" height="15" viewBox="0 0 12 15"><path d="M0 0H8L12 4V15H0Z" fill="#7a7a7a"/><path d="M4 4 L3.5 11.5 M7.5 4 L7 11.5 M2 6.5 H10 M1.8 9.3 H9.8" stroke="#4a6a4a" stroke-width="1.2"/></svg>
<div class="t" style="left:1695px;top:683px;font-size:16px;color:#7c7c7c">UIShopItem</div>
<div class="t" style="left:1521px;top:708px;font-size:16px;color:#c4c4c4">Icon</div>
<div class="fld" style="left:1673px;top:705px;width:224px;height:22px"></div>
<div class="a" style="left:1873px;top:706px;width:23px;height:20px;background:#303030;border-radius:0 3px 3px 0"></div>
<svg style="left:1878px;top:709px" width="14" height="14" viewBox="0 0 14 14"><circle cx="7" cy="7" r="6" fill="none" stroke="#c4c4c4" stroke-width="1.4"/><circle cx="7" cy="7" r="2.2" fill="#c4c4c4"/></svg>
<svg style="left:1678px;top:710px" width="14" height="13" viewBox="0 0 14 13"><rect x="1.5" y="1.5" width="11" height="10" fill="none" stroke="#c4c4c4" stroke-width="1.2"/><rect x="0" y="0" width="3" height="3" fill="#c4c4c4"/><rect x="11" y="0" width="3" height="3" fill="#c4c4c4"/><rect x="0" y="10" width="3" height="3" fill="#c4c4c4"/><rect x="11" y="10" width="3" height="3" fill="#c4c4c4"/><path d="M3 10 L6 6 L8 8 L9.5 7 L11 10Z" fill="#c4c4c4"/></svg>
<div class="t" style="left:1695px;top:708px;font-size:16px;color:#d2d2d2">Image (Image)</div>
<div class="t" style="left:1521px;top:733px;font-size:16px;color:#c4c4c4">Title</div>
<div class="fld" style="left:1673px;top:730px;width:224px;height:22px"></div>
<div class="a" style="left:1873px;top:731px;width:23px;height:20px;background:#303030;border-radius:0 3px 3px 0"></div>
<svg style="left:1878px;top:734px" width="14" height="14" viewBox="0 0 14 14"><circle cx="7" cy="7" r="6" fill="none" stroke="#c4c4c4" stroke-width="1.4"/><circle cx="7" cy="7" r="2.2" fill="#c4c4c4"/></svg>
<svg style="left:1679px;top:735px" width="13" height="13" viewBox="0 0 13 13"><rect width="13" height="13" fill="#c8c8c8"/><path d="M3 3.5H10M6.5 3.5V10.5" stroke="#2a2a2a" stroke-width="1.8"/></svg>
<div class="t" style="left:1695px;top:733px;font-size:16px;color:#d2d2d2">title (Text)</div>
<div class="t" style="left:1521px;top:757px;font-size:16px;color:#c4c4c4">Price</div>
<div class="fld" style="left:1673px;top:754px;width:224px;height:22px"></div>
<div class="a" style="left:1873px;top:755px;width:23px;height:20px;background:#303030;border-radius:0 3px 3px 0"></div>
<svg style="left:1878px;top:758px" width="14" height="14" viewBox="0 0 14 14"><circle cx="7" cy="7" r="6" fill="none" stroke="#c4c4c4" stroke-width="1.4"/><circle cx="7" cy="7" r="2.2" fill="#c4c4c4"/></svg>
<svg style="left:1679px;top:759px" width="13" height="13" viewBox="0 0 13 13"><rect width="13" height="13" fill="#c8c8c8"/><path d="M3 3.5H10M6.5 3.5V10.5" stroke="#2a2a2a" stroke-width="1.8"/></svg>
<div class="t" style="left:1695px;top:757px;font-size:16px;color:#d2d2d2">Price (Text)</div>
<div class="t" style="left:1521px;top:782px;font-size:16px;color:#c4c4c4">Count</div>
<div class="fld" style="left:1673px;top:779px;width:224px;height:22px"></div>
<div class="a" style="left:1873px;top:780px;width:23px;height:20px;background:#303030;border-radius:0 3px 3px 0"></div>
<svg style="left:1878px;top:783px" width="14" height="14" viewBox="0 0 14 14"><circle cx="7" cy="7" r="6" fill="none" stroke="#c4c4c4" stroke-width="1.4"/><circle cx="7" cy="7" r="2.2" fill="#c4c4c4"/></svg>
<svg style="left:1679px;top:784px" width="13" height="13" viewBox="0 0 13 13"><rect width="13" height="13" fill="#c8c8c8"/><path d="M3 3.5H10M6.5 3.5V10.5" stroke="#2a2a2a" stroke-width="1.8"/></svg>
<div class="t" style="left:1695px;top:782px;font-size:16px;color:#d2d2d2">Count (Text)</div>
<div class="t" style="left:1521px;top:807px;font-size:16px;color:#c4c4c4">Background</div>
<div class="fld" style="left:1673px;top:804px;width:224px;height:22px"></div>
<div class="a" style="left:1873px;top:805px;width:23px;height:20px;background:#303030;border-radius:0 3px 3px 0"></div>
<svg style="left:1878px;top:808px" width="14" height="14" viewBox="0 0 14 14"><circle cx="7" cy="7" r="6" fill="none" stroke="#c4c4c4" stroke-width="1.4"/><circle cx="7" cy="7" r="2.2" fill="#c4c4c4"/></svg>
<svg style="left:1678px;top:809px" width="14" height="13" viewBox="0 0 14 13"><rect x="1.5" y="1.5" width="11" height="10" fill="none" stroke="#c4c4c4" stroke-width="1.2"/><rect x="0" y="0" width="3" height="3" fill="#c4c4c4"/><rect x="11" y="0" width="3" height="3" fill="#c4c4c4"/><rect x="0" y="10" width="3" height="3" fill="#c4c4c4"/><rect x="11" y="10" width="3" height="3" fill="#c4c4c4"/><path d="M3 10 L6 6 L8 8 L9.5 7 L11 10Z" fill="#c4c4c4"/></svg>
<div class="t" style="left:1695px;top:807px;font-size:16px;color:#d2d2d2">UIShopItem (Image)</div>
<div class="t" style="left:1521px;top:832px;font-size:16px;color:#c4c4c4">Normal Bag</div>
<div class="fld" style="left:1673px;top:829px;width:224px;height:22px"></div>
<div class="a" style="left:1873px;top:830px;width:23px;height:20px;background:#303030;border-radius:0 3px 3px 0"></div>
<svg style="left:1878px;top:833px" width="14" height="14" viewBox="0 0 14 14"><circle cx="7" cy="7" r="6" fill="none" stroke="#c4c4c4" stroke-width="1.4"/><circle cx="7" cy="7" r="2.2" fill="#c4c4c4"/></svg>
<svg style="left:1678px;top:833px" width="14" height="14" viewBox="0 0 14 14"><rect x="1.5" y="1.5" width="11" height="11" fill="none" stroke="#8a7ae0" stroke-width="1.3"/><rect x="0" y="0" width="3" height="3" fill="#8a7ae0"/><rect x="11" y="0" width="3" height="3" fill="#8a7ae0"/><rect x="0" y="11" width="3" height="3" fill="#8a7ae0"/><rect x="11" y="11" width="3" height="3" fill="#8a7ae0"/><rect x="4.5" y="4.5" width="5" height="5" fill="#e0e0e0"/></svg>
<div class="t" style="left:1694px;top:832px;font-size:16px;color:#d2d2d2">common_bg_02</div>
<div class="t" style="left:1521px;top:857px;font-size:16px;color:#c4c4c4">Selected Bag</div>
<div class="fld" style="left:1673px;top:854px;width:224px;height:22px"></div>
<div class="a" style="left:1873px;top:855px;width:23px;height:20px;background:#303030;border-radius:0 3px 3px 0"></div>
<svg style="left:1878px;top:858px" width="14" height="14" viewBox="0 0 14 14"><circle cx="7" cy="7" r="6" fill="none" stroke="#c4c4c4" stroke-width="1.4"/><circle cx="7" cy="7" r="2.2" fill="#c4c4c4"/></svg>
<svg style="left:1678px;top:858px" width="14" height="14" viewBox="0 0 14 14"><rect x="1.5" y="1.5" width="11" height="11" fill="none" stroke="#8a7ae0" stroke-width="1.3"/><rect x="0" y="0" width="3" height="3" fill="#8a7ae0"/><rect x="11" y="0" width="3" height="3" fill="#8a7ae0"/><rect x="0" y="11" width="3" height="3" fill="#8a7ae0"/><rect x="11" y="11" width="3" height="3" fill="#8a7ae0"/><rect x="4.5" y="4.5" width="5" height="5" fill="#e0e0e0"/></svg>
<div class="t" style="left:1694px;top:857px;font-size:16px;color:#d2d2d2">common_bg_03</div>
<div class="a" style="left:1498px;top:885px;width:406px;height:1px;background:#242424;"></div>
<div class="a" style="left:1522px;top:900px;width:30px;height:30px;background:#ffffff;"></div>
<div class="t" style="left:1566px;top:895px;font-size:17.5px;color:#c4c4c4">Default UI Material (Material)</div>
<svg style="left:1866px;top:896px" width="14" height="14" viewBox="0 0 15 15"><circle cx="7.5" cy="7.5" r="7.5" fill="#c4c4c4"/><path d="M5 5.8 Q5 3.3 7.5 3.3 Q10 3.3 10 5.5 Q10 7 8.3 7.6 Q7.5 8 7.5 9.2" fill="none" stroke="#383838" stroke-width="1.7"/><circle cx="7.5" cy="11.5" r="1.1" fill="#383838"/></svg>
<svg style="left:1892px;top:896px" width="4" height="14" viewBox="0 0 4 14"><circle cx="2" cy="2" r="1.6" fill="#c4c4c4"/><circle cx="2" cy="7" r="1.6" fill="#c4c4c4"/><circle cx="2" cy="12" r="1.6" fill="#c4c4c4"/></svg>
<svg style="left:1506px;top:935px" width="9" height="11" viewBox="0 0 9 11"><path d="M0 0V11L9 5.5Z" fill="#6a6a6a"/></svg>
<div class="t" style="left:1563px;top:928px;font-size:16px;color:#7a7a7a">Shader</div>
<div class="a" style="left:1628px;top:927px;width:150px;height:20px;background:#434343;border-radius:3px"></div>
<div class="t" style="left:1632px;top:928px;font-size:16px;color:#7a7a7a">UI/Default</div>
<svg style="left:1763px;top:934px" width="10" height="6" viewBox="0 0 10 6"><path d="M0 0H10L5 6Z" fill="#7a7a7a"/></svg>
<div class="a" style="left:1784px;top:923px;width:55px;height:21px;background:#585858;border-radius:3px"></div>
<div class="t" style="left:1790px;top:925px;font-size:16px;color:#d2d2d2">Edit...</div>
<div class="a" style="left:1845px;top:927px;width:53px;height:20px;background:#4a4a4a;border-radius:3px"></div>
<svg style="left:1856px;top:931px" width="13" height="11" viewBox="0 0 13 11"><path d="M3 1H13M5 5.5H13M5 10H13" stroke="#b0b0b0" stroke-width="1.2"/><circle cx="1" cy="1" r="0.9" fill="#b0b0b0"/><circle cx="3" cy="5.5" r="0.9" fill="#b0b0b0"/><circle cx="3" cy="10" r="0.9" fill="#b0b0b0"/></svg>
<svg style="left:1882px;top:934px" width="10" height="6" viewBox="0 0 10 6"><path d="M0 0H10L5 6Z" fill="#c4c4c4"/></svg>
<div class="a" style="left:1498px;top:955px;width:406px;height:1px;background:#2a2a2a;"></div>
<div class="a" style="left:1498px;top:969px;width:406px;height:1px;background:#2a2a2a;"></div>
<div class="a" style="left:1558px;top:981px;width:285px;height:27px;background:#585858;border-radius:3px;border-top:1px solid #656565"></div>
<div class="t" style="left:1642px;top:987px;font-size:16px;color:#d8d8d8">Add Component</div>
<div class="a" style="left:0px;top:622px;width:102px;height:26px;background:#3c3c3c;"></div><div class="a" style="left:0px;top:623px;width:102px;height:3px;background:#33608e;"></div>
<svg style="left:8px;top:630px" width="15" height="13" viewBox="0 0 15 13"><path d="M0 1.5Q0 0.5 1 0.5H5.5L7 2.5H14Q15 2.5 15 3.5V12.5H0Z" fill="#c4c4c4"/></svg>
<div class="t" style="left:28px;top:628px;font-size:16px">Project</div>
<svg style="left:112px;top:629px" width="15" height="15" viewBox="0 0 15 15"><circle cx="7.5" cy="7.5" r="7.5" fill="#c4c4c4"/><path d="M7.5 3V7.5H11" fill="none" stroke="#282828" stroke-width="1.6"/></svg>
<div class="t" style="left:132px;top:628px;font-size:16px">Animation</div>
<svg style="left:235px;top:628px" width="18" height="18" viewBox="0 0 18 18"><rect x="2" y="2" width="14" height="14" fill="none" stroke="#9a88e8" stroke-width="1.5"/><rect x="0" y="0" width="4" height="4" fill="#9a88e8"/><rect x="14" y="0" width="4" height="4" fill="#9a88e8"/><rect x="0" y="14" width="4" height="4" fill="#9a88e8"/><rect x="14" y="14" width="4" height="4" fill="#9a88e8"/><path d="M5 13 L12 6 L14 8 L7 15Z" fill="#d8d8d8"/></svg>
<div class="t" style="left:256px;top:628px;font-size:16px">Sprite Editor</div>
<svg style="left:902px;top:629px" width="11" height="13" viewBox="0 0 11 13"><rect x="0.75" y="6.25" width="9.5" height="6" fill="none" stroke="#c4c4c4" stroke-width="1.5"/><path d="M8.5 6 V3.5 Q8.5 1 5.5 1 Q2.5 1 2.5 3.5" fill="none" stroke="#c4c4c4" stroke-width="1.5"/></svg>
<svg style="left:928px;top:629px" width="4" height="14" viewBox="0 0 4 14"><circle cx="2" cy="2" r="1.6" fill="#c4c4c4"/><circle cx="2" cy="7" r="1.6" fill="#c4c4c4"/><circle cx="2" cy="12" r="1.6" fill="#c4c4c4"/></svg>
<div class="a" style="left:0px;top:648px;width:946px;height:25px;background:#3c3c3c;"></div>
<div class="a" style="left:0px;top:672px;width:946px;height:1px;background:#232323;"></div>
<svg style="left:8px;top:653px" width="16" height="16" viewBox="0 0 16 16"><path d="M8 1V15M1 8H15" stroke="#c4c4c4" stroke-width="1.8"/></svg>
<svg style="left:29px;top:658px" width="10" height="6" viewBox="0 0 10 6"><path d="M0 0H10L5 6Z" fill="#c4c4c4"/></svg>
<div class="fld" style="left:365px;top:651px;width:397px;height:20px;border-radius:4px"></div>
<svg style="left:370px;top:655px" width="12" height="12" viewBox="0 0 12 12"><circle cx="4.5" cy="4.5" r="3" fill="none" stroke="#b0b0b0" stroke-width="1.4"/><path d="M6.5 6.5 L10 10" stroke="#b0b0b0" stroke-width="2"/></svg>
<div class="a" style="left:740px;top:652px;width:21px;height:18px;background:#343434;border-radius:0 3px 3px 0"></div>
<svg style="left:743px;top:653px" width="15" height="15" viewBox="0 0 15 15"><rect x="4" y="1" width="10" height="10" fill="none" stroke="#9a9a9a" stroke-width="1"/><rect x="1" y="9" width="5" height="5" fill="none" stroke="#9a9a9a" stroke-width="1"/><path d="M6 9 L11.5 3.5 M8 3.5H11.5V7" fill="none" stroke="#9a9a9a" stroke-width="1"/></svg>
<div class="a" style="left:766px;top:649px;width:1px;height:23px;background:#2e2e2e;"></div>
<div class="a" style="left:799px;top:649px;width:1px;height:23px;background:#2e2e2e;"></div>
<div class="a" style="left:831px;top:649px;width:1px;height:23px;background:#2e2e2e;"></div>
<div class="a" style="left:864px;top:649px;width:1px;height:23px;background:#2e2e2e;"></div>
<div class="a" style="left:897px;top:649px;width:1px;height:23px;background:#2e2e2e;"></div>
<svg style="left:773px;top:653px" width="16" height="16" viewBox="0 0 16 16"><rect x="1" y="0" width="6" height="6" fill="#c4c4c4"/><circle cx="4.5" cy="11.5" r="4" fill="#c4c4c4"/><path d="M11 3 L15.5 11 H6.5Z" fill="#c4c4c4"/></svg>
<svg style="left:806px;top:653px" width="15" height="15" viewBox="0 0 15 15"><path d="M8 0.5 H14.5 V7 L7 14.5 L0.5 8Z" fill="#c4c4c4"/><circle cx="11" cy="4" r="1.3" fill="#3c3c3c"/></svg>
<svg style="left:837px;top:653px" width="16" height="16" viewBox="0 0 16 16"><path d="M5 0.5H11L15.5 5V11L11 15.5H5L0.5 11V5Z" fill="#d8d8d8"/><rect x="6.8" y="3" width="2.4" height="7" rx="1" fill="#3c3c3c"/><circle cx="8" cy="12.3" r="1.3" fill="#3c3c3c"/></svg>
<svg style="left:870px;top:653px" width="16" height="15" viewBox="0 0 16 15"><path d="M8 0.5 L10.2 5.3 L15.5 5.8 L11.5 9.3 L12.7 14.5 L8 11.8 L3.3 14.5 L4.5 9.3 L0.5 5.8 L5.8 5.3Z" fill="#9a9a9a"/></svg>
<svg style="left:902px;top:656px" width="19" height="11" viewBox="0 0 19 11"><path d="M1 5.5 Q9.5 -3 18 5.5 Q9.5 14 1 5.5Z" fill="#5a5a5a"/><circle cx="9.5" cy="5.5" r="2.5" fill="#3c3c3c"/></svg>
<div class="t" style="left:921px;top:653px;font-size:16px;color:#c4c4c4">18</div>
<div class="a" style="left:0px;top:673px;width:242px;height:340px;background:#383838;"></div>
<div class="a" style="left:242px;top:673px;width:1px;height:340px;background:#333333;"></div>
<div class="a" style="left:243px;top:673px;width:16px;height:340px;background:#363636;"></div><div class="a" style="left:259px;top:673px;width:1px;height:340px;background:#2a2a2a;"></div>
<svg style="left:246px;top:682px" width="10" height="7" viewBox="0 0 10 7"><path d="M0 7H10L5 0Z" fill="#b0b0b0"/></svg>
<div class="a" style="left:246px;top:881px;width:11px;height:132px;background:#5e5e5e;border-radius:6px"></div>
<div class="a" style="left:0px;top:948px;width:242px;height:20px;background:#4a4a4a;"></div>
<svg style="left:75px;top:672px" width="15" height="13" viewBox="0 0 15 13"><path d="M0 1.5Q0 0.5 1 0.5H5.5L7 2.5H14Q15 2.5 15 3.5V12.5H0Z" fill="#c4c4c4"/></svg>
<div class="t" style="left:95px;top:670px;font-size:16px">Bag</div>
<svg style="left:75px;top:692px" width="15" height="13" viewBox="0 0 15 13"><path d="M0 1.5Q0 0.5 1 0.5H5.5L7 2.5H14Q15 2.5 15 3.5V12.5H0Z" fill="#c4c4c4"/></svg>
<div class="t" style="left:95px;top:690px;font-size:16px">MiniMap</div>
<svg style="left:75px;top:712px" width="15" height="13" viewBox="0 0 15 13"><path d="M0 1.5Q0 0.5 1 0.5H5.5L7 2.5H14Q15 2.5 15 3.5V12.5H0Z" fill="#c4c4c4"/></svg>
<div class="t" style="left:95px;top:710px;font-size:16px">Shop</div>
<svg style="left:75px;top:732px" width="15" height="13" viewBox="0 0 15 13"><path d="M0 1.5Q0 0.5 1 0.5H5.5L7 2.5H14Q15 2.5 15 3.5V12.5H0Z" fill="#c4c4c4"/></svg>
<div class="t" style="left:95px;top:730px;font-size:16px">TabView</div>
<svg style="left:58px;top:752px" width="15" height="13" viewBox="0 0 15 13"><path d="M0 1.5Q0 0.5 1 0.5H5.5L7 2.5H14Q15 2.5 15 3.5V12.5H0Z" fill="#c4c4c4"/></svg>
<div class="t" style="left:77px;top:750px;font-size:16px">Utilities</div>
<svg style="left:24px;top:773px" width="9" height="11" viewBox="0 0 9 11"><path d="M0 0V11L9 5.5Z" fill="#6a6a6a"/></svg>
<svg style="left:40px;top:772px" width="15" height="13" viewBox="0 0 15 13"><path d="M0 1.5Q0 0.5 1 0.5H5.5L7 2.5H14Q15 2.5 15 3.5V12.5H0Z" fill="#c4c4c4"/></svg>
<div class="t" style="left:60px;top:770px;font-size:16px">Shader</div>
<svg style="left:23px;top:794px" width="10" height="8" viewBox="0 0 10 8"><path d="M0 0H10L5.0 8Z" fill="#6a6a6a"/></svg>
<svg style="left:40px;top:791px" width="17" height="13" viewBox="0 0 17 13"><path d="M0.5 12.5 V1.5Q0.5 0.5 1.5 0.5H5.5L7 2.5H13.5V4.5" fill="none" stroke="#c4c4c4" stroke-width="1.2"/><path d="M0.5 12.5 L3.5 5 H16.5 L13.5 12.5Z" fill="none" stroke="#c4c4c4" stroke-width="1.2"/></svg>
<div class="t" style="left:60px;top:790px;font-size:16px">UI</div>
<svg style="left:58px;top:812px" width="15" height="13" viewBox="0 0 15 13"><path d="M0 1.5Q0 0.5 1 0.5H5.5L7 2.5H14Q15 2.5 15 3.5V12.5H0Z" fill="#c4c4c4"/></svg>
<div class="t" style="left:77px;top:810px;font-size:16px">Animations</div>
<svg style="left:58px;top:832px" width="15" height="13" viewBox="0 0 15 13"><path d="M0 1.5Q0 0.5 1 0.5H5.5L7 2.5H14Q15 2.5 15 3.5V12.5H0Z" fill="#c4c4c4"/></svg>
<div class="t" style="left:77px;top:830px;font-size:16px">Avatars</div>
<svg style="left:58px;top:852px" width="15" height="13" viewBox="0 0 15 13"><path d="M0 1.5Q0 0.5 1 0.5H5.5L7 2.5H14Q15 2.5 15 3.5V12.5H0Z" fill="#c4c4c4"/></svg>
<div class="t" style="left:77px;top:850px;font-size:16px">Common</div>
<svg style="left:58px;top:872px" width="15" height="13" viewBox="0 0 15 13"><path d="M0 1.5Q0 0.5 1 0.5H5.5L7 2.5H14Q15 2.5 15 3.5V12.5H0Z" fill="#c4c4c4"/></svg>
<div class="t" style="left:77px;top:870px;font-size:16px">Fonts</div>
<svg style="left:58px;top:892px" width="15" height="13" viewBox="0 0 15 13"><path d="M0 1.5Q0 0.5 1 0.5H5.5L7 2.5H14Q15 2.5 15 3.5V12.5H0Z" fill="#c4c4c4"/></svg>
<div class="t" style="left:77px;top:890px;font-size:16px">Icons</div>
<svg style="left:58px;top:912px" width="15" height="13" viewBox="0 0 15 13"><path d="M0 1.5Q0 0.5 1 0.5H5.5L7 2.5H14Q15 2.5 15 3.5V12.5H0Z" fill="#c4c4c4"/></svg>
<div class="t" style="left:77px;top:910px;font-size:16px">Items</div>
<svg style="left:58px;top:932px" width="15" height="13" viewBox="0 0 15 13"><path d="M0 1.5Q0 0.5 1 0.5H5.5L7 2.5H14Q15 2.5 15 3.5V12.5H0Z" fill="#c4c4c4"/></svg>
<div class="t" style="left:77px;top:930px;font-size:16px">Login</div>
<svg style="left:58px;top:952px" width="15" height="13" viewBox="0 0 15 13"><path d="M0 1.5Q0 0.5 1 0.5H5.5L7 2.5H14Q15 2.5 15 3.5V12.5H0Z" fill="#c4c4c4"/></svg>
<div class="t" style="left:77px;top:950px;font-size:16px">Prefab</div>
<svg style="left:58px;top:972px" width="15" height="13" viewBox="0 0 15 13"><path d="M0 1.5Q0 0.5 1 0.5H5.5L7 2.5H14Q15 2.5 15 3.5V12.5H0Z" fill="#c4c4c4"/></svg>
<div class="t" style="left:77px;top:970px;font-size:16px">RendererTextures</div>
<svg style="left:58px;top:992px" width="15" height="13" viewBox="0 0 15 13"><path d="M0 1.5Q0 0.5 1 0.5H5.5L7 2.5H14Q15 2.5 15 3.5V12.5H0Z" fill="#c4c4c4"/></svg>
<svg style="left:76px;top:988px" width="32" height="18" viewBox="76 988 32 18" fill="none" stroke="#c4c4c4" stroke-width="1.2" stroke-linecap="round">
<path d="M82 991 L83 992.3"/><path d="M78.5 993.6 H85.5"/><path d="M80.3 995 L79 997"/><path d="M83.8 995 L85.2 997"/><path d="M79 1003.6 L85 997.5"/><path d="M80.2 998.2 L85.5 1003.6"/>
<path d="M87.6 991 L86.3 996"/><path d="M86.8 994 H91"/><path d="M90 994.6 Q89 1000 86 1003.6"/><path d="M87.2 997.5 Q88.5 1001.5 91.2 1003.6"/>
<rect x="94.6" y="991.4" width="9.8" height="5.8"/><path d="M99.5 991.4 V1004.5"/><path d="M94.6 994.3 H104.4"/><path d="M93 999.3 H106"/><path d="M99 999.8 L93.6 1003.6"/><path d="M100 999.8 L105.6 1003.6"/>
</svg>
<svg style="left:58px;top:1012px" width="15" height="13" viewBox="0 0 15 13"><path d="M0 1.5Q0 0.5 1 0.5H5.5L7 2.5H14Q15 2.5 15 3.5V12.5H0Z" fill="#c4c4c4"/></svg>
<svg style="left:76px;top:1008px" width="50" height="6" viewBox="76 1008 50 6" fill="none" stroke="#c4c4c4" stroke-width="1.2"><path d="M79 1011 L80.5 1012.5"/><path d="M83 1011.5 H90.5 L88 1013.5"/><path d="M94 1011 L95.5 1012.5"/><path d="M98 1011.5 H106"/><path d="M112 1010.5 L110 1013.5"/><path d="M111 1011.5 H119.5 V1013.5"/></svg>
<div class="a" style="left:260px;top:673px;width:686px;height:27px;background:#3e3e3e;"></div>
<div class="a" style="left:260px;top:700px;width:686px;height:313px;background:#333333;"></div>
<div class="t" style="left:265px;top:678px;font-size:16px;color:#a8a8a8">Assets</div>
<svg style="left:319px;top:681px" width="6" height="10" viewBox="0 0 6 10"><path d="M1 1L5 5L1 9" fill="none" stroke="#8a8a8a" stroke-width="1.3"/></svg>
<div class="t" style="left:335px;top:678px;font-size:16px;color:#a8a8a8">UI</div>
<svg style="left:356px;top:681px" width="6" height="10" viewBox="0 0 6 10"><path d="M1 1L5 5L1 9" fill="none" stroke="#8a8a8a" stroke-width="1.3"/></svg>
<div class="t b" style="left:373px;top:678px;font-size:16px;color:#d2d2d2">Prefab</div>
<div class="a" style="left:281px;top:716px;width:115px;height:115px;background:#4d4d4d;"></div>
<svg style="left:281px;top:716px" width="115" height="115" viewBox="0 0 115 115"><defs><linearGradient id="cf" x1="0" y1="0" x2="1" y2="1"><stop offset="0" stop-color="#7a7a7a"/><stop offset="1" stop-color="#5e5e5e"/></linearGradient><linearGradient id="cr" x1="0" y1="0" x2="1" y2="1"><stop offset="0" stop-color="#686868"/><stop offset="1" stop-color="#4e4e4e"/></linearGradient></defs>
<path d="M7 25 L53 18 L100 26 L75 37Z" fill="#9a9a9a"/><path d="M7 25 L75 37 L73 106 L10 91Z" fill="url(#cf)"/><path d="M75 37 L100 26 L97 89 L73 106Z" fill="url(#cr)"/></svg>
<svg style="left:303px;top:835px" width="16" height="16" viewBox="0 0 16 16"><path d="M8 0.5 L15 4.3 V12 L8 15.8 L1 12 V4.3Z" fill="#1e3450"/><path d="M8 1.6 L13.6 4.6 L8 7.4 L2.4 4.6Z" fill="#7fd0fa"/><path d="M1.8 5.6 L7.3 8.4 V14.6 L1.8 11.6Z" fill="#6ac4f4"/><path d="M14.2 5.6 L8.7 8.4 V14.6 L14.2 11.6Z" fill="#7fd0fa"/></svg>
<div class="t" style="left:322px;top:836px;font-size:13.5px;color:#c4c4c4">Cube (1)</div>
<svg style="left:421px;top:720px" width="98" height="104" viewBox="0 0 98 104"><path d="M49 1 L96 25 L49 47 L2 25Z" fill="#80d4fa"/><path d="M0 32 L45 54 V104 L0 80Z" fill="#80d4fa" transform="translate(0,0)"/><path d="M98 32 L53 54 V104 L98 80Z" fill="#80d4fa"/></svg>
<div class="t" style="left:435px;top:836px;font-size:13.5px;color:#c4c4c4">UIShopItem</div>
<svg style="left:556px;top:720px" width="98" height="104" viewBox="0 0 98 104"><path d="M49 1 L96 25 L49 47 L2 25Z" fill="#80d4fa"/><path d="M0 32 L45 54 V104 L0 80Z" fill="#80d4fa" transform="translate(0,0)"/><path d="M98 32 L53 54 V104 L98 80Z" fill="#80d4fa"/></svg>
<div class="t" style="left:565px;top:836px;font-size:13.5px;color:#c4c4c4">UIShopItem 1</div>
<div class="a" style="left:948px;top:623px;width:110px;height:25px;background:#3c3c3c;border-radius:4px 4px 0 0"></div>
<svg style="left:959px;top:629px" width="13" height="14" viewBox="0 0 13 14"><rect x="0.7" y="0.7" width="11.6" height="12.6" fill="none" stroke="#c4c4c4" stroke-width="1.4"/><path d="M3 4H10M3 7H10M3 10H10" stroke="#c4c4c4" stroke-width="1.4"/></svg>
<div class="t" style="left:978px;top:628px;font-size:16px">Console</div>
<svg style="left:1476px;top:629px" width="4" height="14" viewBox="0 0 4 14"><circle cx="2" cy="2" r="1.6" fill="#c4c4c4"/><circle cx="2" cy="7" r="1.6" fill="#c4c4c4"/><circle cx="2" cy="12" r="1.6" fill="#c4c4c4"/></svg>
<div class="a" style="left:948px;top:648px;width:547px;height:25px;background:#3c3c3c;"></div>
<div class="a" style="left:948px;top:672px;width:547px;height:1px;background:#232323;"></div>
<div class="t" style="left:953px;top:653px;font-size:16px">Clear</div>
<div class="a" style="left:1000px;top:651px;width:1px;height:18px;background:#2e2e2e;"></div>
<svg style="left:1004px;top:658px" width="10" height="6" viewBox="0 0 10 6"><path d="M0 0H10L5 6Z" fill="#c4c4c4"/></svg>
<div class="a" style="left:1020px;top:649px;width:75px;height:23px;background:#474747;"></div>
<div class="t" style="left:1025px;top:653px;font-size:16px">Collapse</div>
<div class="a" style="left:1095px;top:649px;width:1px;height:23px;background:#2e2e2e;"></div>
<div class="t" style="left:1103px;top:653px;font-size:16px">Error Pause</div>
<div class="t" style="left:1196px;top:653px;font-size:16px">Editor</div>
<svg style="left:1240px;top:658px" width="10" height="6" viewBox="0 0 10 6"><path d="M0 0H10L5 6Z" fill="#c4c4c4"/></svg>
<div class="fld" style="left:1258px;top:651px;width:106px;height:20px;border-radius:4px"></div>
<svg style="left:1264px;top:655px" width="12" height="12" viewBox="0 0 12 12"><circle cx="4.5" cy="4.5" r="3" fill="none" stroke="#b0b0b0" stroke-width="1.4"/><path d="M6.5 6.5 L10 10" stroke="#b0b0b0" stroke-width="2"/></svg>
<div class="a" style="left:1368px;top:649px;width:41px;height:23px;background:#3f3f3f;"></div>
<svg style="left:1374px;top:652px" width="17" height="16" viewBox="0 0 17 16"><path d="M8.5 1 Q16 1 16 7 Q16 13 8.5 13 L4 15.5 L5 12 Q1 10.5 1 7 Q1 1 8.5 1Z" fill="#5a5a5a"/></svg>
<div class="t" style="left:1394px;top:653px;font-size:16px;color:#8a8a8a">0</div>
<div class="a" style="left:1409px;top:649px;width:1px;height:23px;background:#2e2e2e;"></div>
<svg style="left:1415px;top:652px" width="19" height="17" viewBox="0 0 19 17"><path d="M9.5 0.5 L18.5 16.5 H0.5Z" fill="#f2c40e"/><rect x="8.4" y="5" width="2.2" height="6.5" fill="#2a2a2a"/><circle cx="9.5" cy="13.8" r="1.2" fill="#2a2a2a"/></svg>
<div class="t" style="left:1437px;top:653px;font-size:16px">3</div>
<div class="a" style="left:1452px;top:649px;width:43px;height:23px;background:#4a4a4a;"></div>
<svg style="left:1459px;top:652px" width="17" height="17" viewBox="0 0 16 16"><path d="M5 0.5H11L15.5 5V11L11 15.5H5L0.5 11V5Z" fill="#d8d8d8"/><rect x="6.8" y="3" width="2.4" height="7" rx="1" fill="#4a4a4a"/><circle cx="8" cy="12.3" r="1.3" fill="#4a4a4a"/></svg>
<div class="t" style="left:1479px;top:653px;font-size:16px">0</div>
<div class="a" style="left:948px;top:673px;width:547px;height:340px;background:#383838;"></div>
<div class="a" style="left:948px;top:938px;width:547px;height:1px;background:#2a2a2a;"></div>
<div class="a" style="left:1908px;top:1010px;width:9px;height:3px;background:#d8d8d8"></div>
<!-- ARROWS -->
<svg style="left:0;top:0" width="1920" height="1013" viewBox="0 0 1920 1013">
<polygon points="240.6,225.9 1497.1,704.4 1490.1,708.7 1515.0,708.0 1496.9,691.0 1499.2,698.8 241.4,224.1" fill="#ea1f2b"/>
<polygon points="236.7,267.9 1496.1,736.6 1489.1,740.9 1514.0,740.0 1495.7,723.1 1498.2,730.9 237.3,266.1" fill="#ea1f2b"/>
<polygon points="204.7,324.9 1492.0,758.1 1485.2,762.7 1510.0,761.0 1491.2,744.7 1493.9,752.4 205.3,323.1" fill="#ea1f2b"/>
<polygon points="206.6,200.9 1497.4,812.0 1490.1,815.8 1515.0,817.0 1498.3,798.6 1500.0,806.6 207.4,199.1" fill="#4343d6"/>
<polygon points="208.6,288.9 1489.1,784.3 1482.1,788.6 1507.0,788.0 1489.0,770.9 1491.3,778.7 209.4,287.1" fill="#14a6e6"/>
</svg>
</body></html>
